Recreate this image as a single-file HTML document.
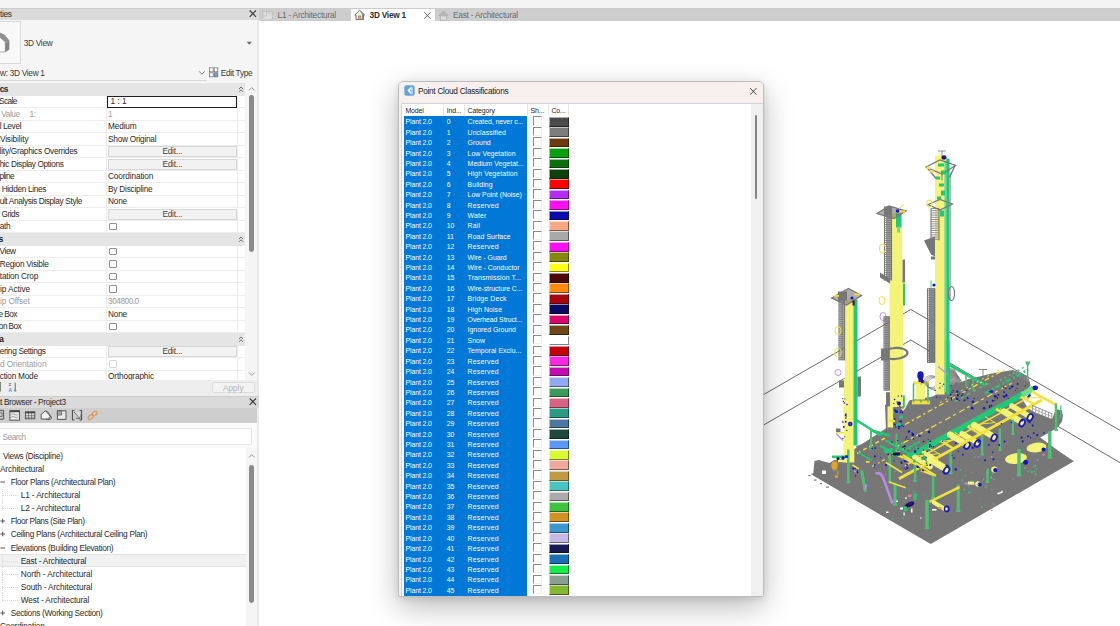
<!DOCTYPE html>
<html lang="en">
<head>
<meta charset="utf-8">
<title>Point Cloud Classifications</title>
<style>
*{box-sizing:border-box;margin:0;padding:0}
html,body{width:1120px;height:626px;overflow:hidden;background:#fff}
body{position:relative;font-family:"Liberation Sans",sans-serif;font-size:8.1px;color:#2a2a2a;letter-spacing:-0.22px}
.abs{position:absolute}
#topstrip{left:0;top:0;width:1120px;height:8px;background:#f4f4f4}
#topline{left:0;top:7.6px;width:1120px;height:0.9px;background:#cbcbcb}
#left{left:0;top:8px;width:257px;height:618px;background:#f5f5f5}
#split{left:256.5px;top:20px;width:2.5px;height:606px;background:#e9e9e9}
.ptitle{position:absolute;left:0;width:258.5px;background:#dadada;color:#333}
.ptitle span{position:absolute;white-space:nowrap}
#iconbox{left:-20px;top:21px;width:41px;height:42.5px;border:1px solid #dadada;background:#f8f8f8}
.t{position:absolute;white-space:nowrap;line-height:12px;height:12px}
#grid{left:0;top:83px;width:245px;height:296.5px;background:#fff;overflow:hidden}
.row{position:absolute;left:0;width:245px;height:12.5px;border-bottom:1px solid #ececec}
.row .l{position:absolute;top:0.8px;line-height:11.5px;white-space:nowrap}
.row .v{position:absolute;left:108px;top:0.8px;line-height:11.5px;white-space:nowrap}
.row.dis{color:#9c9c9c}
.hdr{position:absolute;left:0;width:245px;height:12.5px;z-index:2;background:#e5e5e5;font-weight:bold;color:#222}
.hdr .l{position:absolute;left:0;top:0.4px;line-height:12.5px}
.vline{position:absolute;top:12.5px;left:106.4px;width:1px;height:300px;background:#ececec}
.vline2{position:absolute;top:12.5px;left:237px;width:1px;height:300px;background:#ececec}
.btn{position:absolute;left:107.5px;top:0.6px;width:129.5px;height:11px;border:1px solid #d6d6d6;background:#f2f2f2;text-align:center;line-height:9px;color:#444}
.cb{position:absolute;left:109.2px;top:2.2px;width:7.8px;height:7.8px;border:1px solid #8f8f8f;background:#fff;border-radius:1px}
.dis .cb{border-color:#d8d8d8}
#tabbar{left:258.5px;top:8px;width:862px;height:13.2px;background:#cdcdcd}
#tabact{left:351px;top:8px;width:84px;height:13.2px;background:#fff}
.tab{position:absolute;top:9px;line-height:12px;white-space:nowrap;color:#6c6c6c}
#view{left:259px;top:21.2px;width:861px;height:604.8px;background:#fff}
#dlg{left:398.3px;top:80.5px;width:365.3px;height:516px;border-radius:5px 5px 2px 2px;background:#f0f0f0;border:1px solid #bdbdbd;box-shadow:0 10px 30px rgba(0,0,0,.27),0 2px 7px rgba(0,0,0,.10);overflow:hidden}
#dtitle{left:0;top:0;width:364px;height:22px;background:#f7f0ee}
#lv{left:1.8px;top:21.8px;width:361.6px;height:494px;background:#fff;border:1px solid #cfd4d9;border-bottom:none;border-right:none;overflow:hidden}
#sel{left:1.6px;top:11.9px;width:123px;height:480px;background:#0078d7}
.lr{position:absolute;left:0;height:10.4px;line-height:10.4px;width:360px;font-size:6.9px;letter-spacing:-0.1px;color:#fff;white-space:nowrap}
.lr span{position:absolute;top:0}
.lh{color:#222}
.c1{left:3.4px}.c2{left:44.6px}.c3{left:65.5px}
.ck{position:absolute;left:130.7px;width:9.2px;height:9.2px;background:#fff;border:1.4px solid #8a8a8a;border-right:1px solid #f2f2f2;border-bottom:1px solid #f2f2f2}
.sw{position:absolute;left:147px;width:19.8px;height:9.7px;border:1px solid;border-color:rgba(255,255,255,.55) rgba(0,0,0,.48) rgba(0,0,0,.48) rgba(255,255,255,.55)}
</style>
</head>
<body>
<div id="topstrip" class="abs"></div>
<div id="view" class="abs"></div>
<div id="left" class="abs"></div><div id="split" class="abs"></div>
<div class="abs" style="left:0;top:0;width:258.5px;height:626px;overflow:hidden">
<div class="ptitle" style="top:8px;height:12px"></div>
<div class="t" style="left:-22.79px;top:8.00px;font-size:8.3px;letter-spacing:-0.354px;">Properties</div>
<svg class="abs" style="left:247px;top:9px" width="10" height="10" viewBox="0 0 10 10"><path d="M2.7 1.5 L9 7.9 M9 1.5 L2.7 7.9" stroke="#3a3a3a" stroke-width="1.15" fill="none"/></svg>
<div id="iconbox" class="abs"></div>
<svg class="abs" style="left:0;top:30px" width="20" height="26" viewBox="0 0 20 26">
<polygon points="0,7.4 5.2,11.9 5.2,21.9 0,21.9" fill="#fbfbfb"/>
<polygon points="5.2,11.9 9,13.1 9,19.5 5.2,21.9" fill="#858585"/>
<polygon points="0,3.1 4.4,5 9,10.6 9,13.3 5.2,12.1 0,7.5" fill="#8f8f8f"/>
<path d="M0 3.1 L4.4 5 L9 10.6 L9 19.5 L5.2 21.9 L0 21.9" fill="none" stroke="#7a7a7a" stroke-width="0.6"/>
<path d="M0 7.5 L5.2 12.1 L5.2 21.9" fill="none" stroke="#8a8a8a" stroke-width="0.5"/>
</svg>
<div class="t" style="left:23.80px;top:37.00px;font-size:8.3px;letter-spacing:-0.308px;color:#3a3a3a;">3D View</div>
<svg class="abs" style="left:246px;top:40.5px" width="7" height="5" viewBox="0 0 7 5"><polygon points="0.6,0.8 6,0.8 3.3,3.8" fill="#6e6e6e"/></svg>
<div class="t" style="left:-22.97px;top:66.50px;font-size:8.3px;letter-spacing:-0.299px;color:#3a3a3a;">3D View: 3D View 1</div>
<div class="abs" style="left:0;top:79.5px;width:207px;height:1px;background:#d9d9d9"></div>
<svg class="abs" style="left:198px;top:69.5px" width="8" height="6" viewBox="0 0 8 6"><path d="M1.2 1.4 L3.9 4.2 L6.6 1.4" stroke="#555" stroke-width="0.8" fill="none"/></svg>
<svg class="abs" style="left:209px;top:67px" width="10" height="11" viewBox="0 0 10 11">
<rect x="0.6" y="0.8" width="3.6" height="4" fill="#fff" stroke="#666" stroke-width="0.7"/>
<rect x="5.2" y="0.8" width="3.6" height="4" fill="#fff" stroke="#666" stroke-width="0.7"/>
<rect x="0.6" y="5.8" width="3.6" height="4" fill="#fff" stroke="#666" stroke-width="0.7"/>
<rect x="5.2" y="5.8" width="3.6" height="4" fill="#7f9fc4" stroke="#55708f" stroke-width="0.7"/>
</svg>
<div class="t" style="left:220.80px;top:66.50px;font-size:8.3px;letter-spacing:-0.328px;color:#3a3a3a;">Edit Type</div>
<div id="grid" class="abs"><div class="vline"></div><div class="vline2"></div>
<div class="hdr" style="top:0.0px"><span class="l" style="left:-23.38px;letter-spacing:-0.600px;font-size:8.3px">Graphics</span><svg class="abs" style="left:237.5px;top:3px" width="6" height="7" viewBox="0 0 6 7"><path d="M1 3 L3 1 L5 3 M1 5.8 L3 3.8 L5 5.8" stroke="#444" stroke-width="0.75" fill="none"/></svg></div>
<div class="row" style="top:12.5px"><span class="l" style="left:-18.11px;letter-spacing:-0.600px;font-size:8.3px">View Scale</span><span class="abs" style="left:107px;top:0;width:130.3px;height:12.2px;border:1px solid #1e1e1e;background:#fff;z-index:3"></span><span class="v" style="left:110.5px;font-size:8.3px;letter-spacing:0;z-index:4">1 : 1</span></div>
<div class="row dis" style="top:25.0px"><span class="l" style="left:-18.82px;letter-spacing:-0.486px;font-size:8.3px">Scale Value</span><span class="l" style="left:29.4px;font-size:8.3px">1:</span><span class="v" style="font-size:8.3px">1</span></div>
<div class="row" style="top:37.5px"><span class="l" style="left:-17.95px;letter-spacing:-0.356px;font-size:8.3px">Detail Level</span><span class="v" style="font-size:8.3px;letter-spacing:-0.153px">Medium</span></div>
<div class="row" style="top:50.0px"><span class="l" style="left:-21.06px;letter-spacing:-0.123px;font-size:8.3px">Parts Visibility</span><span class="v" style="font-size:8.3px;letter-spacing:-0.259px">Show Original</span></div>
<div class="row" style="top:62.5px"><span class="l" style="left:-18.33px;letter-spacing:-0.271px;font-size:8.3px">Visibility/Graphics Overrides</span><span class="btn" style="font-size:8.3px">Edit...</span></div>
<div class="row" style="top:75.0px"><span class="l" style="left:-17.32px;letter-spacing:-0.376px;font-size:8.3px">Graphic Display Options</span><span class="btn" style="font-size:8.3px">Edit...</span></div>
<div class="row" style="top:87.5px"><span class="l" style="left:-15.63px;letter-spacing:-0.587px;font-size:8.3px">Discipline</span><span class="v" style="font-size:8.3px;letter-spacing:-0.155px">Coordination</span></div>
<div class="row" style="top:100.0px"><span class="l" style="left:-19.78px;letter-spacing:-0.327px;font-size:8.3px">Show Hidden Lines</span><span class="v" style="font-size:8.3px;letter-spacing:-0.232px">By Discipline</span></div>
<div class="row" style="top:112.5px"><span class="l" style="left:-16.44px;letter-spacing:-0.365px;font-size:8.3px">Default Analysis Display Style</span><span class="v" style="font-size:8.3px;letter-spacing:-0.235px">None</span></div>
<div class="row" style="top:125.0px"><span class="l" style="left:-19.39px;letter-spacing:-0.456px;font-size:8.3px">Show Grids</span><span class="btn" style="font-size:8.3px">Edit...</span></div>
<div class="row" style="top:137.5px"><span class="l" style="left:-21.49px;letter-spacing:-0.279px;font-size:8.3px">Sun Path</span><span class="cb"></span></div>
<div class="hdr" style="top:150.0px"><span class="l" style="left:-23.08px;letter-spacing:-0.600px;font-size:8.3px">Extents</span><svg class="abs" style="left:237.5px;top:3px" width="6" height="7" viewBox="0 0 6 7"><path d="M1 3 L3 1 L5 3 M1 5.8 L3 3.8 L5 5.8" stroke="#444" stroke-width="0.75" fill="none"/></svg></div>
<div class="row" style="top:162.5px"><span class="l" style="left:-18.55px;letter-spacing:-0.435px;font-size:8.3px">Crop View</span><span class="cb"></span></div>
<div class="row" style="top:175.0px"><span class="l" style="left:-19.12px;letter-spacing:-0.293px;font-size:8.3px">Crop Region Visible</span><span class="cb"></span></div>
<div class="row" style="top:187.5px"><span class="l" style="left:-18.76px;letter-spacing:-0.209px;font-size:8.3px">Annotation Crop</span><span class="cb"></span></div>
<div class="row" style="top:200.0px"><span class="l" style="left:-22.14px;letter-spacing:-0.090px;font-size:8.3px">Far Clip Active</span><span class="cb"></span></div>
<div class="row dis" style="top:212.5px"><span class="l" style="left:-22.12px;letter-spacing:-0.095px;font-size:8.3px">Far Clip Offset</span><span class="v" style="font-size:8.3px;letter-spacing:-0.489px">304800.0</span></div>
<div class="row" style="top:225.0px"><span class="l" style="left:-17.94px;letter-spacing:-0.600px;font-size:8.3px">Scope Box</span><span class="v" style="font-size:8.3px;letter-spacing:-0.235px">None</span></div>
<div class="row" style="top:237.5px"><span class="l" style="left:-16.59px;letter-spacing:-0.600px;font-size:8.3px">Section Box</span><span class="cb"></span></div>
<div class="hdr" style="top:250.0px"><span class="l" style="left:-23.65px;letter-spacing:-0.600px;font-size:8.3px">Camera</span><svg class="abs" style="left:237.5px;top:3px" width="6" height="7" viewBox="0 0 6 7"><path d="M1 3 L3 1 L5 3 M1 5.8 L3 3.8 L5 5.8" stroke="#444" stroke-width="0.75" fill="none"/></svg></div>
<div class="row" style="top:262.5px"><span class="l" style="left:-18.82px;letter-spacing:-0.339px;font-size:8.3px">Rendering Settings</span><span class="btn" style="font-size:8.3px">Edit...</span></div>
<div class="row dis" style="top:275.0px"><span class="l" style="left:-21.83px;letter-spacing:-0.078px;font-size:8.3px">Locked Orientation</span><span class="cb"></span></div>
<div class="row" style="top:287.5px"><span class="l" style="left:-18.38px;letter-spacing:-0.250px;font-size:8.3px">Projection Mode</span><span class="v" style="font-size:8.3px;letter-spacing:-0.165px">Orthographic</span></div>
</div>
<div class="abs" style="left:245px;top:83px;width:11.5px;height:296.5px;background:#f5f5f5"></div>
<svg class="abs" style="left:247.5px;top:85.5px" width="8" height="6" viewBox="0 0 8 6"><path d="M1 4.4 L3.8 1.5 L6.6 4.4" stroke="#7a7a7a" stroke-width="0.8" fill="none"/></svg>
<svg class="abs" style="left:247.5px;top:371px" width="8" height="6" viewBox="0 0 8 6"><path d="M1 1.5 L3.8 4.4 L6.6 1.5" stroke="#8a8a8a" stroke-width="0.8" fill="none"/></svg>
<div class="abs" style="left:249px;top:94.5px;width:4.8px;height:157px;border-radius:2.4px;background:#8a8a8a"></div>
<div class="abs" style="left:0;top:379.5px;width:256.5px;height:17.5px;background:#eeeeee"></div>
<svg class="abs" style="left:0;top:381px" width="20" height="13" viewBox="0 0 20 13"><path d="M0.3 1 L0.3 10.5 M15.2 1.6 L15.2 9.6 M14.2 9.2 L15.2 10.4 L16.2 9.2" stroke="#444" stroke-width="0.8" fill="none"/><text x="8.6" y="5.4" font-size="4.4" fill="#666" font-family="Liberation Sans,sans-serif" font-weight="bold">Z</text><text x="8.4" y="10.6" font-size="4.8" fill="#4a90e2" font-family="Liberation Sans,sans-serif" font-weight="bold">A</text></svg>
<div class="abs" style="left:211.5px;top:381.8px;width:43.5px;height:11.2px;border:1px solid #dcdcdc;border-radius:2.2px;background:#f3f3f3"></div>
<div class="t" style="left:223.00px;top:381.50px;font-size:8.3px;letter-spacing:-0.052px;color:#b3b3b3;">Apply</div>
<div class="ptitle" style="top:396.3px;height:11.3px;border-top:0.9px solid #cdcdcd"></div>
<div class="t" style="left:-21.37px;top:396.20px;font-size:8.3px;letter-spacing:-0.359px;">Project Browser - Project3</div>
<svg class="abs" style="left:247px;top:397.3px" width="10" height="10" viewBox="0 0 10 10"><path d="M2.7 1.5 L9 7.9 M9 1.5 L2.7 7.9" stroke="#3a3a3a" stroke-width="1.15" fill="none"/></svg>
<div class="abs" style="left:0;top:407.5px;width:256.5px;height:15px;background:#cecece"></div>
<svg class="abs" style="left:0;top:408px" width="100" height="14" viewBox="0 0 100 14">
<g fill="none" stroke="#474747" stroke-width="0.9">
<path d="M0 2.4 L3.6 2.4 L3.6 11.2 L0 11.2"/><rect x="-1" y="4.8" width="3" height="3.6" stroke-width="0.7"/>
<rect x="9.9" y="2.6" width="9.6" height="9.6" fill="#e9e9e9"/><path d="M9.9 3.4 H19.5" stroke-width="1.6"/><path d="M11.4 6.4 q1.6 -1.4 3.2 0 t3.2 0 M11.4 9 q1.6 -1.4 3.2 0 t3.2 0" stroke-width="0.6" stroke="#777"/>
<rect x="25.4" y="3.8" width="9.4" height="7" fill="#e9e9e9"/><path d="M25.4 4.6 H34.8" stroke-width="1.6"/><path d="M25.4 7.4 H34.8 M25.4 9.2 H34.8 M28.5 4.6 V10.8 M31.6 4.6 V10.8" stroke-width="0.55"/>
<path d="M41.2 11 L41.2 6.2 L45.6 2.8 L51.2 9.4 L49.6 11.2 Z" fill="#f4f4f4" stroke-linejoin="round"/><path d="M45.6 2.8 L48 4 L51.4 9.2 M46 11 L49.8 11.4" stroke-width="0.7"/><circle cx="50.2" cy="10" r="1.3" fill="#bdbdbd" stroke-width="0.6"/>
<path d="M57.4 2.8 H66 V11.4 H57.4 Z" fill="#eaeaea"/><path d="M57.4 2.8 H61.6 V7 H57.4 Z" fill="#a9a9a9" stroke-width="0.7"/>
<path d="M74.4 2.4 H72.4 V12 H74.4 M79.6 2.4 H81.6 V12 H79.6" stroke-width="1.0"/><path d="M74 4 L80 10.4 M80 6.4 V10.4 H76" stroke-width="0.75"/><path d="M74.5 3.6 L80 9.8 L80 4.4 Z" fill="#dedede" stroke="none"/>
</g>
<g fill="none" stroke="#e0904a" stroke-width="1.0"><ellipse cx="90.6" cy="9" rx="2.9" ry="1.8" transform="rotate(-40 90.6 9)"/><ellipse cx="94.6" cy="5.6" rx="2.9" ry="1.8" transform="rotate(-40 94.6 5.6)"/></g>
</svg>
<div class="abs" style="left:0;top:422.5px;width:256.5px;height:26px;background:#fafafa"></div>
<div class="abs" style="left:-2px;top:428px;width:254px;height:17px;background:#fff;border:1px solid #e6e6e6"></div>
<div class="t" style="left:2.60px;top:430.80px;font-size:8.3px;letter-spacing:-0.549px;color:#9a9a9a;">Search</div>
<div class="abs" style="left:0;top:448px;width:245.5px;height:178px;background:#fff"></div>
<div class="abs" style="left:0;top:554.3px;width:245.5px;height:13px;background:#f1f1f1;border-top:1px solid #e2e2e2;border-bottom:1px solid #e2e2e2"></div>
<div class="t" style="left:3.00px;top:450.30px;font-size:8.3px;letter-spacing:-0.313px;color:#2b2b2b;">Views (Discipline)</div>
<div class="t" style="left:0.00px;top:463.33px;font-size:8.3px;letter-spacing:-0.164px;color:#2b2b2b;">Architectural</div>
<div class="t" style="left:10.70px;top:476.36px;font-size:8.3px;letter-spacing:-0.320px;color:#2b2b2b;">Floor Plans (Architectural Plan)</div>
<svg class="abs" style="left:0;top:479.36px" width="6" height="6" viewBox="0 0 6 6"><path d="M0.4 3 H5" stroke="#444" stroke-width="0.9" fill="none"/></svg>
<div class="t" style="left:20.80px;top:489.39px;font-size:8.3px;letter-spacing:-0.154px;color:#2b2b2b;">L1 - Architectural</div>
<div class="abs" style="left:2px;top:488.89px;width:0;height:13.03px;border-left:1px dotted #d9d9d9"></div>
<div class="abs" style="left:2px;top:495.39px;width:16px;height:0;border-top:1px dotted #d9d9d9"></div>
<div class="t" style="left:20.80px;top:502.42px;font-size:8.3px;letter-spacing:-0.154px;color:#2b2b2b;">L2 - Architectural</div>
<div class="abs" style="left:2px;top:501.92px;width:0;height:6.5px;border-left:1px dotted #d9d9d9"></div>
<div class="abs" style="left:2px;top:508.42px;width:16px;height:0;border-top:1px dotted #d9d9d9"></div>
<div class="t" style="left:10.70px;top:515.45px;font-size:8.3px;letter-spacing:-0.393px;color:#2b2b2b;">Floor Plans (Site Plan)</div>
<svg class="abs" style="left:0;top:518.45px" width="6" height="6" viewBox="0 0 6 6"><path d="M0.4 3 H5 M2.7 0.7 V5.3" stroke="#444" stroke-width="0.9" fill="none"/></svg>
<div class="t" style="left:10.70px;top:528.48px;font-size:8.3px;letter-spacing:-0.293px;color:#2b2b2b;">Ceiling Plans (Architectural Ceiling Plan)</div>
<svg class="abs" style="left:0;top:531.48px" width="6" height="6" viewBox="0 0 6 6"><path d="M0.4 3 H5 M2.7 0.7 V5.3" stroke="#444" stroke-width="0.9" fill="none"/></svg>
<div class="t" style="left:10.70px;top:541.51px;font-size:8.3px;letter-spacing:-0.307px;color:#2b2b2b;">Elevations (Building Elevation)</div>
<svg class="abs" style="left:0;top:544.51px" width="6" height="6" viewBox="0 0 6 6"><path d="M0.4 3 H5" stroke="#444" stroke-width="0.9" fill="none"/></svg>
<div class="t" style="left:20.80px;top:554.54px;font-size:8.3px;letter-spacing:-0.213px;color:#2b2b2b;">East - Architectural</div>
<div class="abs" style="left:2px;top:554.04px;width:0;height:13.03px;border-left:1px dotted #d9d9d9"></div>
<div class="abs" style="left:2px;top:560.54px;width:16px;height:0;border-top:1px dotted #d9d9d9"></div>
<div class="t" style="left:20.80px;top:567.57px;font-size:8.3px;letter-spacing:-0.092px;color:#2b2b2b;">North - Architectural</div>
<div class="abs" style="left:2px;top:567.07px;width:0;height:13.03px;border-left:1px dotted #d9d9d9"></div>
<div class="abs" style="left:2px;top:573.57px;width:16px;height:0;border-top:1px dotted #d9d9d9"></div>
<div class="t" style="left:20.80px;top:580.60px;font-size:8.3px;letter-spacing:-0.159px;color:#2b2b2b;">South - Architectural</div>
<div class="abs" style="left:2px;top:580.10px;width:0;height:13.03px;border-left:1px dotted #d9d9d9"></div>
<div class="abs" style="left:2px;top:586.60px;width:16px;height:0;border-top:1px dotted #d9d9d9"></div>
<div class="t" style="left:20.80px;top:593.63px;font-size:8.3px;letter-spacing:-0.170px;color:#2b2b2b;">West - Architectural</div>
<div class="abs" style="left:2px;top:593.13px;width:0;height:6.5px;border-left:1px dotted #d9d9d9"></div>
<div class="abs" style="left:2px;top:599.63px;width:16px;height:0;border-top:1px dotted #d9d9d9"></div>
<div class="t" style="left:10.70px;top:606.66px;font-size:8.3px;letter-spacing:-0.309px;color:#2b2b2b;">Sections (Working Section)</div>
<svg class="abs" style="left:0;top:609.66px" width="6" height="6" viewBox="0 0 6 6"><path d="M0.4 3 H5 M2.7 0.7 V5.3" stroke="#444" stroke-width="0.9" fill="none"/></svg>
<div class="t" style="left:0.00px;top:619.69px;font-size:8.3px;letter-spacing:-0.205px;color:#2b2b2b;">Coordination</div>
<div class="abs" style="left:245.5px;top:448px;width:11px;height:178px;background:#f5f5f5"></div>
<svg class="abs" style="left:247.5px;top:452.5px" width="8" height="6" viewBox="0 0 8 6"><path d="M1 4.4 L3.8 1.5 L6.6 4.4" stroke="#7a7a7a" stroke-width="0.8" fill="none"/></svg>
<div class="abs" style="left:249px;top:465px;width:4.8px;height:138px;border-radius:2.4px;background:#8a8a8a"></div>
</div>
<div id="tabbar" class="abs"></div><div id="tabact" class="abs"></div>
<svg class="abs" style="left:261.5px;top:9.5px" width="12" height="11" viewBox="0 0 12 11">
<rect x="0.9" y="1.6" width="9.4" height="8.4" fill="#dedede" stroke="#b9b9b9" stroke-width="0.7"/>
<path d="M4.4 1.6 V6 M4.4 6 H0.9 M6.6 0.8 V3.6 H10.3" fill="none" stroke="#bdbdbd" stroke-width="0.7"/>
</svg>
<div class="t" style="left:277.50px;top:9.20px;font-size:8.3px;letter-spacing:-0.210px;color:#6c6c6c;">L1 - Architectural</div>
<svg class="abs" style="left:353.5px;top:9.3px" width="12" height="12" viewBox="0 0 12 12">
<path d="M0.8 5.9 L5.6 1.2 L10.6 5.9 L9.4 5.9 L9.4 10.6 L2 10.6 L2 5.9 Z" fill="#f1efe9" stroke="#5e5e5e" stroke-width="0.9" stroke-linejoin="round"/>
<path d="M5.6 1.2 L10.6 5.9 L9.4 5.9 L9.4 10.6 L8 10.6 L8 5.4 Z" fill="#8a8a8a"/>
<rect x="4.4" y="7" width="2.5" height="3.6" fill="#d8b46a" stroke="#7a6a45" stroke-width="0.5"/>
</svg>
<div class="t" style="left:369.50px;top:9.20px;font-size:8.3px;letter-spacing:-0.233px;font-weight:bold;color:#2d2d2d;">3D View 1</div>
<svg class="abs" style="left:423px;top:10.5px" width="9" height="9" viewBox="0 0 9 9"><path d="M1.2 1.2 L7.6 7.8 M7.6 1.2 L1.2 7.8" stroke="#4a4a4a" stroke-width="0.85" fill="none"/></svg>
<svg class="abs" style="left:437.5px;top:9.5px" width="12" height="12" viewBox="0 0 12 12">
<path d="M0.8 5.6 L5.6 1.4 L10.4 5.6 Z" fill="#b5b5b5" stroke="#a6a6a6" stroke-width="0.6"/>
<rect x="2.6" y="5.9" width="6" height="4.4" fill="#dcdcdc" stroke="#ababab" stroke-width="0.7"/>
</svg>
<div class="t" style="left:453.00px;top:9.20px;font-size:8.3px;letter-spacing:-0.233px;color:#6c6c6c;">East - Architectural</div>
<svg class="abs" style="left:259px;top:21.5px" width="861" height="604.5" viewBox="259 21.5 861 604.5">
<line x1="700.0" y1="430.9" x2="910.8" y2="309.0" stroke="#3a3a3a" stroke-width="0.75"/>
<line x1="910.8" y1="309.0" x2="1120.0" y2="429.8" stroke="#3a3a3a" stroke-width="0.75"/>
<line x1="700.0" y1="461.2" x2="910.8" y2="339.6" stroke="#3a3a3a" stroke-width="0.75"/>
<line x1="910.8" y1="339.6" x2="1120.0" y2="462.2" stroke="#3a3a3a" stroke-width="0.75"/>
<polygon points="814.5,460.5 819.0,459.4 824.0,461.0 829.5,462.6 834.0,459.5 843.5,458.8 849.0,452.0 957.0,381.6 1041.0,437.6 1059.0,450.7 1073.9,460.7 930.7,543.5 813.0,475.0" fill="#777777"/>
<rect x="811.5" y="473.0" width="3.0" height="1.3" fill="#777777"/>
<rect x="808.5" y="474.5" width="2.0" height="1.2" fill="#777777"/>
<rect x="814.0" y="479.0" width="2.5" height="1.2" fill="#777777"/>
<rect x="820.0" y="482.5" width="2.0" height="1.2" fill="#777777"/>
<rect x="826.0" y="486.0" width="3.0" height="1.2" fill="#777777"/>
<rect x="822.0" y="470.0" width="4.0" height="3.5" fill="#fff"/>
<rect x="935.0" y="155.0" width="9.6" height="238.0" fill="#f3f378"/>
<rect x="944.3" y="160.0" width="2.2" height="235.0" fill="#6fdc8c"/>
<rect x="946.3" y="158.0" width="3.2" height="237.0" fill="#22c777"/>
<line x1="950.2" y1="172.0" x2="950.2" y2="300.0" stroke="#777777" stroke-width="0.8"/>
<line x1="938.0" y1="150.5" x2="946.0" y2="150.5" stroke="#777777" stroke-width="0.8"/>
<line x1="942.0" y1="150.5" x2="942.0" y2="156.0" stroke="#777777" stroke-width="0.8"/>
<ellipse cx="944.0" cy="157.0" rx="2.6" ry="2.2" fill="#2a1a78" transform="rotate(0 944.0 157.0)"/>
<polygon points="926.0,166.5 940.0,159.5 955.5,165.0 942.0,173.5" fill="none" stroke="#777777" stroke-width="1.3"/>
<line x1="926.5" y1="166.5" x2="936.0" y2="178.0" stroke="#777777" stroke-width="1.3"/>
<line x1="955.0" y1="165.0" x2="949.5" y2="177.0" stroke="#777777" stroke-width="1.3"/>
<line x1="942.0" y1="173.5" x2="942.0" y2="180.0" stroke="#777777" stroke-width="1.0"/>
<rect x="926.5" y="166.0" width="4.0" height="2.5" fill="#f2e23c"/>
<rect x="929.0" y="170.0" width="5.0" height="2.0" fill="#f2e23c"/>
<rect x="938.0" y="163.0" width="6.0" height="3.0" fill="#22c777"/>
<rect x="941.0" y="170.0" width="5.0" height="4.0" fill="#22c777"/>
<rect x="936.0" y="176.0" width="4.0" height="3.0" fill="#22c777"/>
<rect x="939.0" y="183.0" width="5.0" height="3.0" fill="#22c777"/>
<rect x="941.0" y="190.0" width="4.0" height="5.0" fill="#22c777"/>
<rect x="937.0" y="196.0" width="4.0" height="3.0" fill="#22c777"/>
<rect x="940.0" y="210.0" width="4.0" height="6.0" fill="#22c777"/>
<polygon points="928.0,204.0 940.0,199.0 952.5,203.5 940.0,209.5" fill="none" stroke="#777777" stroke-width="1.2"/>
<ellipse cx="929.5" cy="203.0" rx="2.6" ry="3.4" fill="none" stroke="#f2e23c" stroke-width="1.1" transform="rotate(0 929.5 203.0)"/>
<line x1="931.0" y1="208.0" x2="931.0" y2="240.0" stroke="#777777" stroke-width="1.1"/>
<line x1="939.0" y1="208.0" x2="939.0" y2="240.0" stroke="#777777" stroke-width="1.1"/>
<line x1="931.0" y1="208.0" x2="939.0" y2="208.0" stroke="#777777" stroke-width="0.8"/>
<line x1="931.0" y1="210.2" x2="939.0" y2="210.2" stroke="#777777" stroke-width="0.8"/>
<line x1="931.0" y1="212.4" x2="939.0" y2="212.4" stroke="#777777" stroke-width="0.8"/>
<line x1="931.0" y1="214.6" x2="939.0" y2="214.6" stroke="#777777" stroke-width="0.8"/>
<line x1="931.0" y1="216.8" x2="939.0" y2="216.8" stroke="#777777" stroke-width="0.8"/>
<line x1="931.0" y1="219.0" x2="939.0" y2="219.0" stroke="#777777" stroke-width="0.8"/>
<line x1="931.0" y1="221.2" x2="939.0" y2="221.2" stroke="#777777" stroke-width="0.8"/>
<line x1="931.0" y1="223.4" x2="939.0" y2="223.4" stroke="#777777" stroke-width="0.8"/>
<line x1="931.0" y1="225.6" x2="939.0" y2="225.6" stroke="#777777" stroke-width="0.8"/>
<line x1="931.0" y1="227.8" x2="939.0" y2="227.8" stroke="#777777" stroke-width="0.8"/>
<line x1="931.0" y1="230.0" x2="939.0" y2="230.0" stroke="#777777" stroke-width="0.8"/>
<line x1="931.0" y1="232.2" x2="939.0" y2="232.2" stroke="#777777" stroke-width="0.8"/>
<line x1="931.0" y1="234.4" x2="939.0" y2="234.4" stroke="#777777" stroke-width="0.8"/>
<line x1="931.0" y1="236.6" x2="939.0" y2="236.6" stroke="#777777" stroke-width="0.8"/>
<line x1="931.0" y1="238.8" x2="939.0" y2="238.8" stroke="#777777" stroke-width="0.8"/>
<polygon points="924.0,240.0 935.0,236.0 935.0,256.0 931.0,254.0" fill="#777777"/>
<rect x="931.0" y="256.0" width="4.0" height="3.0" fill="#777777"/>
<line x1="927.5" y1="288.0" x2="927.5" y2="362.0" stroke="#777777" stroke-width="1.1"/>
<line x1="934.8" y1="288.0" x2="934.8" y2="362.0" stroke="#777777" stroke-width="1.1"/>
<line x1="927.5" y1="288.0" x2="934.8" y2="288.0" stroke="#777777" stroke-width="0.8"/>
<line x1="927.5" y1="289.8" x2="934.8" y2="289.8" stroke="#777777" stroke-width="0.8"/>
<line x1="927.5" y1="291.6" x2="934.8" y2="291.6" stroke="#777777" stroke-width="0.8"/>
<line x1="927.5" y1="293.4" x2="934.8" y2="293.4" stroke="#777777" stroke-width="0.8"/>
<line x1="927.5" y1="295.2" x2="934.8" y2="295.2" stroke="#777777" stroke-width="0.8"/>
<line x1="927.5" y1="297.0" x2="934.8" y2="297.0" stroke="#777777" stroke-width="0.8"/>
<line x1="927.5" y1="298.8" x2="934.8" y2="298.8" stroke="#777777" stroke-width="0.8"/>
<line x1="927.5" y1="300.6" x2="934.8" y2="300.6" stroke="#777777" stroke-width="0.8"/>
<line x1="927.5" y1="302.4" x2="934.8" y2="302.4" stroke="#777777" stroke-width="0.8"/>
<line x1="927.5" y1="304.2" x2="934.8" y2="304.2" stroke="#777777" stroke-width="0.8"/>
<line x1="927.5" y1="306.0" x2="934.8" y2="306.0" stroke="#777777" stroke-width="0.8"/>
<line x1="927.5" y1="307.8" x2="934.8" y2="307.8" stroke="#777777" stroke-width="0.8"/>
<line x1="927.5" y1="309.6" x2="934.8" y2="309.6" stroke="#777777" stroke-width="0.8"/>
<line x1="927.5" y1="311.4" x2="934.8" y2="311.4" stroke="#777777" stroke-width="0.8"/>
<line x1="927.5" y1="313.2" x2="934.8" y2="313.2" stroke="#777777" stroke-width="0.8"/>
<line x1="927.5" y1="315.0" x2="934.8" y2="315.0" stroke="#777777" stroke-width="0.8"/>
<line x1="927.5" y1="316.8" x2="934.8" y2="316.8" stroke="#777777" stroke-width="0.8"/>
<line x1="927.5" y1="318.6" x2="934.8" y2="318.6" stroke="#777777" stroke-width="0.8"/>
<line x1="927.5" y1="320.4" x2="934.8" y2="320.4" stroke="#777777" stroke-width="0.8"/>
<line x1="927.5" y1="322.2" x2="934.8" y2="322.2" stroke="#777777" stroke-width="0.8"/>
<line x1="927.5" y1="324.0" x2="934.8" y2="324.0" stroke="#777777" stroke-width="0.8"/>
<line x1="927.5" y1="325.8" x2="934.8" y2="325.8" stroke="#777777" stroke-width="0.8"/>
<line x1="927.5" y1="327.6" x2="934.8" y2="327.6" stroke="#777777" stroke-width="0.8"/>
<line x1="927.5" y1="329.4" x2="934.8" y2="329.4" stroke="#777777" stroke-width="0.8"/>
<line x1="927.5" y1="331.2" x2="934.8" y2="331.2" stroke="#777777" stroke-width="0.8"/>
<line x1="927.5" y1="333.0" x2="934.8" y2="333.0" stroke="#777777" stroke-width="0.8"/>
<line x1="927.5" y1="334.8" x2="934.8" y2="334.8" stroke="#777777" stroke-width="0.8"/>
<line x1="927.5" y1="336.6" x2="934.8" y2="336.6" stroke="#777777" stroke-width="0.8"/>
<line x1="927.5" y1="338.4" x2="934.8" y2="338.4" stroke="#777777" stroke-width="0.8"/>
<line x1="927.5" y1="340.2" x2="934.8" y2="340.2" stroke="#777777" stroke-width="0.8"/>
<line x1="927.5" y1="342.0" x2="934.8" y2="342.0" stroke="#777777" stroke-width="0.8"/>
<line x1="927.5" y1="343.8" x2="934.8" y2="343.8" stroke="#777777" stroke-width="0.8"/>
<line x1="927.5" y1="345.6" x2="934.8" y2="345.6" stroke="#777777" stroke-width="0.8"/>
<line x1="927.5" y1="347.4" x2="934.8" y2="347.4" stroke="#777777" stroke-width="0.8"/>
<line x1="927.5" y1="349.2" x2="934.8" y2="349.2" stroke="#777777" stroke-width="0.8"/>
<line x1="927.5" y1="351.0" x2="934.8" y2="351.0" stroke="#777777" stroke-width="0.8"/>
<line x1="927.5" y1="352.8" x2="934.8" y2="352.8" stroke="#777777" stroke-width="0.8"/>
<line x1="927.5" y1="354.6" x2="934.8" y2="354.6" stroke="#777777" stroke-width="0.8"/>
<line x1="927.5" y1="356.4" x2="934.8" y2="356.4" stroke="#777777" stroke-width="0.8"/>
<line x1="927.5" y1="358.2" x2="934.8" y2="358.2" stroke="#777777" stroke-width="0.8"/>
<line x1="927.5" y1="360.0" x2="934.8" y2="360.0" stroke="#777777" stroke-width="0.8"/>
<line x1="927.5" y1="361.8" x2="934.8" y2="361.8" stroke="#777777" stroke-width="0.8"/>
<rect x="929.0" y="288.0" width="6.0" height="74.0" fill="#777777cc"/>
<ellipse cx="951.5" cy="293.0" rx="3" ry="7" fill="none" stroke="#777777" stroke-width="1.2" transform="rotate(0 951.5 293.0)"/>
<circle cx="934.0" cy="284.5" r="1.6" fill="#1616c4"/>
<line x1="931.0" y1="280.0" x2="931.0" y2="287.0" stroke="#22c777" stroke-width="0.9"/>
<rect x="892.0" y="212.5" width="10.0" height="70.0" fill="#f3f378"/>
<rect x="889.5" y="280.0" width="13.5" height="148.0" fill="#f3f378"/>
<rect x="896.0" y="213.0" width="5.4" height="14.0" fill="#22c777"/>
<rect x="897.0" y="226.0" width="3.0" height="6.0" fill="#6fdc8c"/>
<polygon points="877.0,213.0 889.0,205.5 906.0,210.5 894.0,218.0" fill="#77777799" stroke="#777777" stroke-width="1.2"/>
<rect x="884.0" y="206.0" width="8.0" height="9.0" fill="#777777"/>
<circle cx="897.5" cy="210.5" r="1.7" fill="#1616c4"/>
<line x1="899.0" y1="208.0" x2="904.0" y2="204.0" stroke="#f2e23c" stroke-width="1"/>
<rect x="900.0" y="210.0" width="5.0" height="2.0" fill="#f2e23c"/>
<line x1="884.5" y1="214.0" x2="884.5" y2="280.0" stroke="#777777" stroke-width="1.1"/>
<line x1="891.5" y1="214.0" x2="891.5" y2="280.0" stroke="#777777" stroke-width="1.1"/>
<line x1="884.5" y1="214.0" x2="891.5" y2="214.0" stroke="#777777" stroke-width="0.8"/>
<line x1="884.5" y1="216.0" x2="891.5" y2="216.0" stroke="#777777" stroke-width="0.8"/>
<line x1="884.5" y1="218.0" x2="891.5" y2="218.0" stroke="#777777" stroke-width="0.8"/>
<line x1="884.5" y1="220.0" x2="891.5" y2="220.0" stroke="#777777" stroke-width="0.8"/>
<line x1="884.5" y1="222.0" x2="891.5" y2="222.0" stroke="#777777" stroke-width="0.8"/>
<line x1="884.5" y1="224.0" x2="891.5" y2="224.0" stroke="#777777" stroke-width="0.8"/>
<line x1="884.5" y1="226.0" x2="891.5" y2="226.0" stroke="#777777" stroke-width="0.8"/>
<line x1="884.5" y1="228.0" x2="891.5" y2="228.0" stroke="#777777" stroke-width="0.8"/>
<line x1="884.5" y1="230.0" x2="891.5" y2="230.0" stroke="#777777" stroke-width="0.8"/>
<line x1="884.5" y1="232.0" x2="891.5" y2="232.0" stroke="#777777" stroke-width="0.8"/>
<line x1="884.5" y1="234.0" x2="891.5" y2="234.0" stroke="#777777" stroke-width="0.8"/>
<line x1="884.5" y1="236.0" x2="891.5" y2="236.0" stroke="#777777" stroke-width="0.8"/>
<line x1="884.5" y1="238.0" x2="891.5" y2="238.0" stroke="#777777" stroke-width="0.8"/>
<line x1="884.5" y1="240.0" x2="891.5" y2="240.0" stroke="#777777" stroke-width="0.8"/>
<line x1="884.5" y1="242.0" x2="891.5" y2="242.0" stroke="#777777" stroke-width="0.8"/>
<line x1="884.5" y1="244.0" x2="891.5" y2="244.0" stroke="#777777" stroke-width="0.8"/>
<line x1="884.5" y1="246.0" x2="891.5" y2="246.0" stroke="#777777" stroke-width="0.8"/>
<line x1="884.5" y1="248.0" x2="891.5" y2="248.0" stroke="#777777" stroke-width="0.8"/>
<line x1="884.5" y1="250.0" x2="891.5" y2="250.0" stroke="#777777" stroke-width="0.8"/>
<line x1="884.5" y1="252.0" x2="891.5" y2="252.0" stroke="#777777" stroke-width="0.8"/>
<line x1="884.5" y1="254.0" x2="891.5" y2="254.0" stroke="#777777" stroke-width="0.8"/>
<line x1="884.5" y1="256.0" x2="891.5" y2="256.0" stroke="#777777" stroke-width="0.8"/>
<line x1="884.5" y1="258.0" x2="891.5" y2="258.0" stroke="#777777" stroke-width="0.8"/>
<line x1="884.5" y1="260.0" x2="891.5" y2="260.0" stroke="#777777" stroke-width="0.8"/>
<line x1="884.5" y1="262.0" x2="891.5" y2="262.0" stroke="#777777" stroke-width="0.8"/>
<line x1="884.5" y1="264.0" x2="891.5" y2="264.0" stroke="#777777" stroke-width="0.8"/>
<line x1="884.5" y1="266.0" x2="891.5" y2="266.0" stroke="#777777" stroke-width="0.8"/>
<line x1="884.5" y1="268.0" x2="891.5" y2="268.0" stroke="#777777" stroke-width="0.8"/>
<line x1="884.5" y1="270.0" x2="891.5" y2="270.0" stroke="#777777" stroke-width="0.8"/>
<line x1="884.5" y1="272.0" x2="891.5" y2="272.0" stroke="#777777" stroke-width="0.8"/>
<line x1="884.5" y1="274.0" x2="891.5" y2="274.0" stroke="#777777" stroke-width="0.8"/>
<line x1="884.5" y1="276.0" x2="891.5" y2="276.0" stroke="#777777" stroke-width="0.8"/>
<line x1="884.5" y1="278.0" x2="891.5" y2="278.0" stroke="#777777" stroke-width="0.8"/>
<rect x="886.0" y="214.0" width="5.0" height="66.0" fill="#777777bb"/>
<rect x="902.5" y="259.0" width="2.6" height="23.0" fill="#777777"/>
<rect x="903.0" y="283.0" width="2.0" height="22.0" fill="#22c777"/>
<ellipse cx="882.5" cy="248.0" rx="3" ry="4.5" fill="none" stroke="#f2e23c" stroke-width="1.1" transform="rotate(0 882.5 248.0)"/>
<ellipse cx="882.0" cy="300.0" rx="3" ry="4" fill="none" stroke="#f2e23c" stroke-width="1.0" transform="rotate(0 882.0 300.0)"/>
<ellipse cx="883.0" cy="316.0" rx="3" ry="4" fill="none" stroke="#b98ae8" stroke-width="0.9" transform="rotate(0 883.0 316.0)"/>
<polygon points="880.0,272.0 890.0,278.0 890.0,283.0 880.0,277.0" fill="#777777"/>
<line x1="884.0" y1="316.0" x2="884.0" y2="390.0" stroke="#777777" stroke-width="1.1"/>
<line x1="889.3" y1="316.0" x2="889.3" y2="390.0" stroke="#777777" stroke-width="1.1"/>
<line x1="884.0" y1="316.0" x2="889.3" y2="316.0" stroke="#777777" stroke-width="0.8"/>
<line x1="884.0" y1="317.8" x2="889.3" y2="317.8" stroke="#777777" stroke-width="0.8"/>
<line x1="884.0" y1="319.6" x2="889.3" y2="319.6" stroke="#777777" stroke-width="0.8"/>
<line x1="884.0" y1="321.4" x2="889.3" y2="321.4" stroke="#777777" stroke-width="0.8"/>
<line x1="884.0" y1="323.2" x2="889.3" y2="323.2" stroke="#777777" stroke-width="0.8"/>
<line x1="884.0" y1="325.0" x2="889.3" y2="325.0" stroke="#777777" stroke-width="0.8"/>
<line x1="884.0" y1="326.8" x2="889.3" y2="326.8" stroke="#777777" stroke-width="0.8"/>
<line x1="884.0" y1="328.6" x2="889.3" y2="328.6" stroke="#777777" stroke-width="0.8"/>
<line x1="884.0" y1="330.4" x2="889.3" y2="330.4" stroke="#777777" stroke-width="0.8"/>
<line x1="884.0" y1="332.2" x2="889.3" y2="332.2" stroke="#777777" stroke-width="0.8"/>
<line x1="884.0" y1="334.0" x2="889.3" y2="334.0" stroke="#777777" stroke-width="0.8"/>
<line x1="884.0" y1="335.8" x2="889.3" y2="335.8" stroke="#777777" stroke-width="0.8"/>
<line x1="884.0" y1="337.6" x2="889.3" y2="337.6" stroke="#777777" stroke-width="0.8"/>
<line x1="884.0" y1="339.4" x2="889.3" y2="339.4" stroke="#777777" stroke-width="0.8"/>
<line x1="884.0" y1="341.2" x2="889.3" y2="341.2" stroke="#777777" stroke-width="0.8"/>
<line x1="884.0" y1="343.0" x2="889.3" y2="343.0" stroke="#777777" stroke-width="0.8"/>
<line x1="884.0" y1="344.8" x2="889.3" y2="344.8" stroke="#777777" stroke-width="0.8"/>
<line x1="884.0" y1="346.6" x2="889.3" y2="346.6" stroke="#777777" stroke-width="0.8"/>
<line x1="884.0" y1="348.4" x2="889.3" y2="348.4" stroke="#777777" stroke-width="0.8"/>
<line x1="884.0" y1="350.2" x2="889.3" y2="350.2" stroke="#777777" stroke-width="0.8"/>
<line x1="884.0" y1="352.0" x2="889.3" y2="352.0" stroke="#777777" stroke-width="0.8"/>
<line x1="884.0" y1="353.8" x2="889.3" y2="353.8" stroke="#777777" stroke-width="0.8"/>
<line x1="884.0" y1="355.6" x2="889.3" y2="355.6" stroke="#777777" stroke-width="0.8"/>
<line x1="884.0" y1="357.4" x2="889.3" y2="357.4" stroke="#777777" stroke-width="0.8"/>
<line x1="884.0" y1="359.2" x2="889.3" y2="359.2" stroke="#777777" stroke-width="0.8"/>
<line x1="884.0" y1="361.0" x2="889.3" y2="361.0" stroke="#777777" stroke-width="0.8"/>
<line x1="884.0" y1="362.8" x2="889.3" y2="362.8" stroke="#777777" stroke-width="0.8"/>
<line x1="884.0" y1="364.6" x2="889.3" y2="364.6" stroke="#777777" stroke-width="0.8"/>
<line x1="884.0" y1="366.4" x2="889.3" y2="366.4" stroke="#777777" stroke-width="0.8"/>
<line x1="884.0" y1="368.2" x2="889.3" y2="368.2" stroke="#777777" stroke-width="0.8"/>
<line x1="884.0" y1="370.0" x2="889.3" y2="370.0" stroke="#777777" stroke-width="0.8"/>
<line x1="884.0" y1="371.8" x2="889.3" y2="371.8" stroke="#777777" stroke-width="0.8"/>
<line x1="884.0" y1="373.6" x2="889.3" y2="373.6" stroke="#777777" stroke-width="0.8"/>
<line x1="884.0" y1="375.4" x2="889.3" y2="375.4" stroke="#777777" stroke-width="0.8"/>
<line x1="884.0" y1="377.2" x2="889.3" y2="377.2" stroke="#777777" stroke-width="0.8"/>
<line x1="884.0" y1="379.0" x2="889.3" y2="379.0" stroke="#777777" stroke-width="0.8"/>
<line x1="884.0" y1="380.8" x2="889.3" y2="380.8" stroke="#777777" stroke-width="0.8"/>
<line x1="884.0" y1="382.6" x2="889.3" y2="382.6" stroke="#777777" stroke-width="0.8"/>
<line x1="884.0" y1="384.4" x2="889.3" y2="384.4" stroke="#777777" stroke-width="0.8"/>
<line x1="884.0" y1="386.2" x2="889.3" y2="386.2" stroke="#777777" stroke-width="0.8"/>
<line x1="884.0" y1="388.0" x2="889.3" y2="388.0" stroke="#777777" stroke-width="0.8"/>
<line x1="884.0" y1="389.8" x2="889.3" y2="389.8" stroke="#777777" stroke-width="0.8"/>
<rect x="885.0" y="316.0" width="4.0" height="74.0" fill="#777777bb"/>
<ellipse cx="895.0" cy="353.0" rx="12.5" ry="5.5" fill="none" stroke="#777777" stroke-width="2.2" transform="rotate(-4 895.0 353.0)"/>
<rect x="881.0" y="348.0" width="8.0" height="12.0" fill="#777777"/>
<rect x="886.0" y="392.0" width="4.0" height="30.0" fill="#777777"/>
<rect x="845.0" y="299.0" width="8.7" height="82.0" fill="#f3f378"/>
<rect x="843.5" y="378.0" width="10.8" height="84.0" fill="#f3f378"/>
<rect x="853.5" y="299.0" width="4.0" height="146.0" fill="#22c777"/>
<polygon points="831.7,297.6 848.4,288.0 861.6,295.0 846.7,304.6" fill="#77777799" stroke="#777777" stroke-width="1.2"/>
<rect x="838.0" y="291.0" width="9.0" height="9.0" fill="#777777"/>
<rect x="834.0" y="294.5" width="5.0" height="1.8" fill="#f2e23c"/>
<rect x="854.0" y="293.0" width="6.0" height="1.8" fill="#f2e23c"/>
<circle cx="852.0" cy="297.5" r="1.6" fill="#1616c4"/>
<rect x="852.5" y="300.0" width="2.2" height="5.0" fill="#4a1030"/>
<line x1="839.0" y1="300.0" x2="839.0" y2="360.0" stroke="#777777" stroke-width="1.1"/>
<line x1="844.6" y1="300.0" x2="844.6" y2="360.0" stroke="#777777" stroke-width="1.1"/>
<line x1="839.0" y1="300.0" x2="844.6" y2="300.0" stroke="#777777" stroke-width="0.8"/>
<line x1="839.0" y1="301.9" x2="844.6" y2="301.9" stroke="#777777" stroke-width="0.8"/>
<line x1="839.0" y1="303.8" x2="844.6" y2="303.8" stroke="#777777" stroke-width="0.8"/>
<line x1="839.0" y1="305.7" x2="844.6" y2="305.7" stroke="#777777" stroke-width="0.8"/>
<line x1="839.0" y1="307.6" x2="844.6" y2="307.6" stroke="#777777" stroke-width="0.8"/>
<line x1="839.0" y1="309.5" x2="844.6" y2="309.5" stroke="#777777" stroke-width="0.8"/>
<line x1="839.0" y1="311.4" x2="844.6" y2="311.4" stroke="#777777" stroke-width="0.8"/>
<line x1="839.0" y1="313.3" x2="844.6" y2="313.3" stroke="#777777" stroke-width="0.8"/>
<line x1="839.0" y1="315.2" x2="844.6" y2="315.2" stroke="#777777" stroke-width="0.8"/>
<line x1="839.0" y1="317.1" x2="844.6" y2="317.1" stroke="#777777" stroke-width="0.8"/>
<line x1="839.0" y1="319.0" x2="844.6" y2="319.0" stroke="#777777" stroke-width="0.8"/>
<line x1="839.0" y1="320.9" x2="844.6" y2="320.9" stroke="#777777" stroke-width="0.8"/>
<line x1="839.0" y1="322.8" x2="844.6" y2="322.8" stroke="#777777" stroke-width="0.8"/>
<line x1="839.0" y1="324.7" x2="844.6" y2="324.7" stroke="#777777" stroke-width="0.8"/>
<line x1="839.0" y1="326.6" x2="844.6" y2="326.6" stroke="#777777" stroke-width="0.8"/>
<line x1="839.0" y1="328.5" x2="844.6" y2="328.5" stroke="#777777" stroke-width="0.8"/>
<line x1="839.0" y1="330.4" x2="844.6" y2="330.4" stroke="#777777" stroke-width="0.8"/>
<line x1="839.0" y1="332.3" x2="844.6" y2="332.3" stroke="#777777" stroke-width="0.8"/>
<line x1="839.0" y1="334.2" x2="844.6" y2="334.2" stroke="#777777" stroke-width="0.8"/>
<line x1="839.0" y1="336.1" x2="844.6" y2="336.1" stroke="#777777" stroke-width="0.8"/>
<line x1="839.0" y1="338.0" x2="844.6" y2="338.0" stroke="#777777" stroke-width="0.8"/>
<line x1="839.0" y1="339.9" x2="844.6" y2="339.9" stroke="#777777" stroke-width="0.8"/>
<line x1="839.0" y1="341.8" x2="844.6" y2="341.8" stroke="#777777" stroke-width="0.8"/>
<line x1="839.0" y1="343.7" x2="844.6" y2="343.7" stroke="#777777" stroke-width="0.8"/>
<line x1="839.0" y1="345.6" x2="844.6" y2="345.6" stroke="#777777" stroke-width="0.8"/>
<line x1="839.0" y1="347.5" x2="844.6" y2="347.5" stroke="#777777" stroke-width="0.8"/>
<line x1="839.0" y1="349.4" x2="844.6" y2="349.4" stroke="#777777" stroke-width="0.8"/>
<line x1="839.0" y1="351.3" x2="844.6" y2="351.3" stroke="#777777" stroke-width="0.8"/>
<line x1="839.0" y1="353.2" x2="844.6" y2="353.2" stroke="#777777" stroke-width="0.8"/>
<line x1="839.0" y1="355.1" x2="844.6" y2="355.1" stroke="#777777" stroke-width="0.8"/>
<line x1="839.0" y1="357.0" x2="844.6" y2="357.0" stroke="#777777" stroke-width="0.8"/>
<line x1="839.0" y1="358.9" x2="844.6" y2="358.9" stroke="#777777" stroke-width="0.8"/>
<rect x="840.3" y="300.0" width="3.5" height="60.0" fill="#777777bb"/>
<ellipse cx="838.0" cy="330.0" rx="3" ry="4" fill="none" stroke="#f2e23c" stroke-width="1.0" transform="rotate(0 838.0 330.0)"/>
<ellipse cx="838.0" cy="352.0" rx="3.2" ry="4.2" fill="none" stroke="#f2e23c" stroke-width="1.0" transform="rotate(0 838.0 352.0)"/>
<ellipse cx="838.0" cy="372.0" rx="3" ry="3" fill="none" stroke="#b98ae8" stroke-width="0.9" transform="rotate(0 838.0 372.0)"/>
<rect x="857.5" y="376.0" width="3.5" height="20.0" fill="#777777"/>
<rect x="839.0" y="380.0" width="5.0" height="7.0" fill="#777777"/>
<circle cx="844.3" cy="402.5" r="0.83" fill="#1616c4"/>
<circle cx="842.9" cy="421.8" r="0.68" fill="#1616c4"/>
<circle cx="842.8" cy="420.4" r="0.52" fill="#1616c4"/>
<circle cx="844.9" cy="398.5" r="0.55" fill="#1616c4"/>
<circle cx="844.8" cy="436.3" r="0.56" fill="#1616c4"/>
<circle cx="843.7" cy="426.4" r="0.97" fill="#1616c4"/>
<circle cx="845.7" cy="414.8" r="0.99" fill="#1616c4"/>
<circle cx="842.8" cy="437.9" r="0.64" fill="#1616c4"/>
<circle cx="843.3" cy="400.9" r="0.65" fill="#1616c4"/>
<circle cx="847.0" cy="404.0" r="0.79" fill="#1616c4"/>
<circle cx="846.0" cy="413.6" r="0.77" fill="#1616c4"/>
<circle cx="842.8" cy="398.0" r="0.6" fill="#1616c4"/>
<circle cx="846.2" cy="416.4" r="0.66" fill="#1616c4"/>
<circle cx="845.7" cy="417.7" r="0.65" fill="#1616c4"/>
<circle cx="846.9" cy="429.9" r="0.62" fill="#1616c4"/>
<circle cx="845.7" cy="421.3" r="0.94" fill="#1616c4"/>
<circle cx="850.2" cy="423.5" r="2.3" fill="#1616c4"/>
<circle cx="850.2" cy="423.5" r="1.0" fill="#5a5ae0"/>
<rect x="836.0" y="428.0" width="4.5" height="4.5" fill="#777777"/>
<line x1="836.0" y1="433.0" x2="843.0" y2="440.0" stroke="#b98ae8" stroke-width="1.3"/>
<rect x="836.0" y="431.5" width="8.0" height="1.4" fill="#f2e23c"/>
<line x1="855.5" y1="419.0" x2="886.0" y2="438.5" stroke="#22c777" stroke-width="2.4"/>
<polygon points="855.5,446.0 864.0,442.8 881.8,435.0 889.5,430.0 888.7,420.0 903.0,412.0 909.5,399.7 933.0,396.0 942.7,389.3 967.6,378.9 992.6,372.7 1013.0,369.5 1028.4,376.0 1030.5,385.0 1021.0,396.5 1029.0,409.5 1052.0,418.5 1056.0,409.0 1061.5,409.5 1063.0,415.0 1062.0,421.0 1058.0,426.5 1052.0,430.5 1039.8,437.2 957.0,500.0 934.0,512.0" fill="#777777"/>
<rect x="889.5" y="395.0" width="13.5" height="12.0" fill="#f3f378"/>
<rect x="903.0" y="395.0" width="1.8" height="12.0" fill="#22c777"/>
<polygon points="885.0,404.0 890.0,407.0 903.0,406.0 906.0,412.0 906.0,428.0 886.0,431.0" fill="#777777"/>
<rect x="886.0" y="392.0" width="4.0" height="16.0" fill="#777777"/>
<rect x="887.5" y="406.0" width="5.5" height="21.0" fill="#f3f378"/>
<rect x="893.0" y="410.0" width="5.0" height="2.5" fill="#22c777"/>
<rect x="899.0" y="415.0" width="4.0" height="3.0" fill="#22c777"/>
<rect x="889.0" y="419.0" width="6.0" height="2.5" fill="#f2e23c"/>
<rect x="896.0" y="423.0" width="5.0" height="2.5" fill="#22c777"/>
<rect x="901.0" y="408.0" width="3.0" height="2.0" fill="#f3f378"/>
<rect x="890.0" y="413.0" width="3.0" height="2.0" fill="#f3f378"/>
<rect x="913.0" y="381.0" width="16.0" height="3.0" fill="#f2e23c"/>
<rect x="912.0" y="400.0" width="18.0" height="3.8" fill="#f2e23c"/>
<line x1="913.5" y1="383.0" x2="913.5" y2="402.0" stroke="#4fbf73" stroke-width="1.6"/>
<line x1="921.0" y1="383.0" x2="921.0" y2="402.0" stroke="#4fbf73" stroke-width="1.6"/>
<line x1="928.0" y1="383.0" x2="928.0" y2="402.0" stroke="#4fbf73" stroke-width="1.6"/>
<rect x="916.0" y="384.0" width="9.0" height="15.0" fill="#f3f378"/>
<ellipse cx="920.5" cy="375.0" rx="3.2" ry="4.2" fill="#1616c4" transform="rotate(0 920.5 375.0)"/>
<rect x="918.5" y="378.0" width="4.5" height="3.5" fill="#2a1a78"/>
<circle cx="922.5" cy="381.0" r="1.8" fill="#1616c4"/>
<ellipse cx="931.0" cy="381.0" rx="7" ry="6" fill="none" stroke="#777777" stroke-width="0.6" transform="rotate(0 931.0 381.0)"/>
<ellipse cx="932.2" cy="381.8" rx="7" ry="6" fill="none" stroke="#777777" stroke-width="0.6" transform="rotate(0 932.2 381.8)"/>
<ellipse cx="933.4" cy="382.6" rx="7" ry="6" fill="none" stroke="#777777" stroke-width="0.6" transform="rotate(0 933.4 382.6)"/>
<ellipse cx="934.6" cy="383.4" rx="7" ry="6" fill="none" stroke="#777777" stroke-width="0.6" transform="rotate(0 934.6 383.4)"/>
<polygon points="946.0,366.0 955.0,369.0 960.0,380.0 960.0,390.0 946.0,394.0" fill="#777777b0"/>
<ellipse cx="950.0" cy="376.0" rx="7" ry="6" fill="none" stroke="#777777" stroke-width="0.7" transform="rotate(0 950.0 376.0)"/>
<ellipse cx="951.2" cy="377.6" rx="7" ry="6" fill="none" stroke="#777777" stroke-width="0.7" transform="rotate(0 951.2 377.6)"/>
<ellipse cx="952.4" cy="379.2" rx="7" ry="6" fill="none" stroke="#777777" stroke-width="0.7" transform="rotate(0 952.4 379.2)"/>
<ellipse cx="953.6" cy="380.8" rx="7" ry="6" fill="none" stroke="#777777" stroke-width="0.7" transform="rotate(0 953.6 380.8)"/>
<ellipse cx="954.8" cy="382.4" rx="7" ry="6" fill="none" stroke="#777777" stroke-width="0.7" transform="rotate(0 954.8 382.4)"/>
<rect x="935.0" y="340.0" width="9.6" height="54.0" fill="#f3f378"/>
<rect x="944.3" y="340.0" width="2.2" height="52.0" fill="#6fdc8c"/>
<rect x="946.3" y="340.0" width="3.2" height="54.0" fill="#22c777"/>
<line x1="927.5" y1="340.0" x2="927.5" y2="362.0" stroke="#777777" stroke-width="1.1"/>
<line x1="934.8" y1="340.0" x2="934.8" y2="362.0" stroke="#777777" stroke-width="1.1"/>
<line x1="927.5" y1="340.0" x2="934.8" y2="340.0" stroke="#777777" stroke-width="0.8"/>
<line x1="927.5" y1="341.8" x2="934.8" y2="341.8" stroke="#777777" stroke-width="0.8"/>
<line x1="927.5" y1="343.6" x2="934.8" y2="343.6" stroke="#777777" stroke-width="0.8"/>
<line x1="927.5" y1="345.4" x2="934.8" y2="345.4" stroke="#777777" stroke-width="0.8"/>
<line x1="927.5" y1="347.2" x2="934.8" y2="347.2" stroke="#777777" stroke-width="0.8"/>
<line x1="927.5" y1="349.0" x2="934.8" y2="349.0" stroke="#777777" stroke-width="0.8"/>
<line x1="927.5" y1="350.8" x2="934.8" y2="350.8" stroke="#777777" stroke-width="0.8"/>
<line x1="927.5" y1="352.6" x2="934.8" y2="352.6" stroke="#777777" stroke-width="0.8"/>
<line x1="927.5" y1="354.4" x2="934.8" y2="354.4" stroke="#777777" stroke-width="0.8"/>
<line x1="927.5" y1="356.2" x2="934.8" y2="356.2" stroke="#777777" stroke-width="0.8"/>
<line x1="927.5" y1="358.0" x2="934.8" y2="358.0" stroke="#777777" stroke-width="0.8"/>
<line x1="927.5" y1="359.8" x2="934.8" y2="359.8" stroke="#777777" stroke-width="0.8"/>
<line x1="927.5" y1="361.6" x2="934.8" y2="361.6" stroke="#777777" stroke-width="0.8"/>
<rect x="929.0" y="340.0" width="6.0" height="22.0" fill="#777777cc"/>
<rect x="935.0" y="362.0" width="1.5" height="28.0" fill="#f3f378"/>
<line x1="938.0" y1="366.0" x2="948.0" y2="374.0" stroke="#b98ae8" stroke-width="1.2"/>
<line x1="949.5" y1="364.5" x2="969.0" y2="375.5" stroke="#22c777" stroke-width="2.8"/>
<line x1="969.0" y1="375.5" x2="985.0" y2="384.5" stroke="#22c777" stroke-width="2.8"/>
<line x1="966.0" y1="374.0" x2="966.0" y2="386.0" stroke="#4fbf73" stroke-width="1.6"/>
<line x1="973.0" y1="378.0" x2="973.0" y2="390.0" stroke="#4fbf73" stroke-width="1.6"/>
<line x1="1027.7" y1="362.0" x2="1027.7" y2="380.0" stroke="#4fbf73" stroke-width="1.4"/>
<polygon points="1025.0,361.0 1030.6,361.0 1029.0,364.8 1026.5,364.8" fill="#4fbf73"/>
<line x1="979.0" y1="369.0" x2="987.0" y2="369.0" stroke="#777777" stroke-width="0.9"/>
<line x1="983.0" y1="369.0" x2="983.0" y2="376.0" stroke="#777777" stroke-width="0.9"/>
<line x1="1013.0" y1="369.5" x2="1013.0" y2="374.0" stroke="#9a9a9a" stroke-width="0.5"/>
<line x1="1014.9" y1="370.4" x2="1014.9" y2="374.9" stroke="#9a9a9a" stroke-width="0.5"/>
<line x1="1016.8" y1="371.3" x2="1016.8" y2="375.8" stroke="#9a9a9a" stroke-width="0.5"/>
<line x1="1018.7" y1="372.2" x2="1018.7" y2="376.7" stroke="#9a9a9a" stroke-width="0.5"/>
<line x1="1020.6" y1="373.1" x2="1020.6" y2="377.6" stroke="#9a9a9a" stroke-width="0.5"/>
<line x1="1022.5" y1="374.0" x2="1022.5" y2="378.5" stroke="#9a9a9a" stroke-width="0.5"/>
<line x1="1024.4" y1="374.9" x2="1024.4" y2="379.4" stroke="#9a9a9a" stroke-width="0.5"/>
<line x1="1026.3" y1="375.8" x2="1026.3" y2="380.3" stroke="#9a9a9a" stroke-width="0.5"/>
<line x1="1028.2" y1="376.7" x2="1028.2" y2="381.2" stroke="#9a9a9a" stroke-width="0.5"/>
<line x1="857.0" y1="453.0" x2="886.0" y2="437.0" stroke="#f2e23c" stroke-width="1.5" stroke-dasharray="4 3"/>
<line x1="872.0" y1="466.0" x2="905.0" y2="447.8" stroke="#f2e23c" stroke-width="1.2" stroke-dasharray="3 4 1.5 3"/>
<line x1="905.0" y1="424.0" x2="1004.0" y2="369.4" stroke="#f2e23c" stroke-width="1.3" stroke-dasharray="5 3 2 3"/>
<line x1="897.0" y1="446.0" x2="1012.0" y2="382.5" stroke="#f2e23c" stroke-width="1.2" stroke-dasharray="3 4 6 3"/>
<line x1="886.0" y1="452.0" x2="930.0" y2="427.7" stroke="#f2e23c" stroke-width="1.1" stroke-dasharray="3 3 1.5 4"/>
<line x1="940.0" y1="402.0" x2="1000.0" y2="368.9" stroke="#f2e23c" stroke-width="1.0" stroke-dasharray="2 4"/>
<line x1="985.0" y1="393.0" x2="1028.0" y2="369.3" stroke="#22c777" stroke-width="2.4" stroke-dasharray="5 3 2 2"/>
<line x1="955.0" y1="401.0" x2="992.0" y2="380.6" stroke="#4fbf73" stroke-width="1.8" stroke-dasharray="3 4"/>
<line x1="1000.0" y1="380.0" x2="1026.0" y2="365.6" stroke="#4fbf73" stroke-width="1.6" stroke-dasharray="2 3"/>
<circle cx="995.2" cy="395.8" r="1.38" fill="#1616c4"/>
<circle cx="957.3" cy="398.4" r="1.21" fill="#1616c4"/>
<circle cx="959.4" cy="399.8" r="0.63" fill="#1616c4"/>
<circle cx="991.4" cy="405.3" r="1.06" fill="#1616c4"/>
<circle cx="1004.3" cy="396.3" r="1.16" fill="#1616c4"/>
<circle cx="986.9" cy="401.6" r="0.96" fill="#1616c4"/>
<circle cx="1002.1" cy="408.9" r="0.98" fill="#1616c4"/>
<circle cx="991.2" cy="391.2" r="1.16" fill="#1616c4"/>
<circle cx="990.1" cy="409.9" r="1.26" fill="#1616c4"/>
<circle cx="967.6" cy="397.7" r="1.13" fill="#1616c4"/>
<circle cx="951.4" cy="399.2" r="0.73" fill="#1616c4"/>
<circle cx="957.3" cy="391.2" r="1.21" fill="#1616c4"/>
<circle cx="958.0" cy="395.0" r="0.91" fill="#1616c4"/>
<circle cx="1004.0" cy="391.6" r="0.96" fill="#1616c4"/>
<circle cx="984.1" cy="407.7" r="1.26" fill="#1616c4"/>
<circle cx="1003.6" cy="395.6" r="0.93" fill="#1616c4"/>
<circle cx="972.2" cy="407.7" r="1.37" fill="#1616c4"/>
<circle cx="959.4" cy="393.5" r="0.79" fill="#1616c4"/>
<circle cx="964.5" cy="399.7" r="1.07" fill="#1616c4"/>
<circle cx="966.3" cy="390.1" r="0.94" fill="#1616c4"/>
<circle cx="972.9" cy="401.3" r="1.36" fill="#1616c4"/>
<circle cx="992.8" cy="400.3" r="1.09" fill="#1616c4"/>
<circle cx="991.9" cy="391.1" r="1.32" fill="#1616c4"/>
<circle cx="998.4" cy="407.5" r="1.24" fill="#1616c4"/>
<circle cx="974.3" cy="398.0" r="0.68" fill="#1616c4"/>
<circle cx="989.3" cy="391.2" r="0.65" fill="#1616c4"/>
<circle cx="962.9" cy="393.2" r="0.87" fill="#1616c4"/>
<circle cx="953.3" cy="390.0" r="0.72" fill="#1616c4"/>
<circle cx="956.3" cy="397.3" r="0.62" fill="#1616c4"/>
<circle cx="1004.2" cy="402.3" r="0.72" fill="#1616c4"/>
<circle cx="1009.8" cy="387.9" r="0.85" fill="#1616c4"/>
<circle cx="1006.3" cy="394.9" r="1.3" fill="#1616c4"/>
<circle cx="1015.6" cy="389.8" r="0.66" fill="#1616c4"/>
<circle cx="1005.8" cy="387.8" r="0.79" fill="#1616c4"/>
<circle cx="1025.4" cy="385.3" r="0.62" fill="#1616c4"/>
<circle cx="1028.7" cy="390.4" r="0.7" fill="#1616c4"/>
<circle cx="1017.7" cy="383.4" r="0.97" fill="#1616c4"/>
<circle cx="1029.4" cy="395.1" r="1.09" fill="#1616c4"/>
<circle cx="1010.1" cy="388.1" r="0.72" fill="#1616c4"/>
<circle cx="1023.8" cy="390.5" r="1.15" fill="#1616c4"/>
<circle cx="1011.9" cy="386.1" r="1.17" fill="#1616c4"/>
<circle cx="1029.6" cy="394.9" r="1.16" fill="#1616c4"/>
<circle cx="1025.1" cy="393.4" r="0.76" fill="#1616c4"/>
<circle cx="1017.0" cy="388.0" r="0.62" fill="#1616c4"/>
<circle cx="1003.8" cy="386.9" r="0.78" fill="#1616c4"/>
<circle cx="1021.7" cy="396.4" r="0.91" fill="#1616c4"/>
<circle cx="1028.3" cy="396.8" r="1.27" fill="#1616c4"/>
<circle cx="1012.8" cy="386.1" r="0.76" fill="#1616c4"/>
<circle cx="961.8" cy="395.3" r="0.81" fill="#1a1a1a"/>
<circle cx="1004.0" cy="405.4" r="0.74" fill="#1a1a1a"/>
<circle cx="989.2" cy="404.8" r="0.54" fill="#1a1a1a"/>
<circle cx="989.6" cy="406.6" r="0.89" fill="#1a1a1a"/>
<circle cx="995.0" cy="399.6" r="0.59" fill="#1a1a1a"/>
<circle cx="997.3" cy="397.3" r="0.9" fill="#1a1a1a"/>
<circle cx="1008.3" cy="398.3" r="0.7" fill="#1a1a1a"/>
<circle cx="1006.8" cy="403.6" r="0.59" fill="#1a1a1a"/>
<circle cx="957.6" cy="394.4" r="0.95" fill="#1a1a1a"/>
<circle cx="998.4" cy="394.3" r="0.91" fill="#1a1a1a"/>
<line x1="1033.5" y1="388.0" x2="905.0" y2="458.2" stroke="#22c777" stroke-width="5.8"/>
<ellipse cx="906.0" cy="459.4" rx="2.6" ry="2.2" fill="#1616c4" transform="rotate(0 906.0 459.4)"/>
<line x1="1033.5" y1="388.0" x2="1022.0" y2="394.3" stroke="#6fdc8c" stroke-width="5.8"/>
<ellipse cx="1035.3" cy="387.3" rx="2.7" ry="2.3" fill="#1616c4" transform="rotate(0 1035.3 387.3)"/>
<line x1="905.0" y1="465.2" x2="1024.0" y2="399.5" stroke="#f2e23c" stroke-width="1.6"/>
<line x1="1031.6" y1="390.8" x2="1055.0" y2="403.8" stroke="#f2e23c" stroke-width="2.5"/>
<line x1="1019.6" y1="397.6" x2="1041.6" y2="397.0" stroke="#f2e23c" stroke-width="1.1"/>
<line x1="1000.0" y1="408.0" x2="1013.0" y2="415.5" stroke="#f2e23c" stroke-width="1.0"/>
<line x1="968.0" y1="425.0" x2="995.0" y2="422.0" stroke="#f2e23c" stroke-width="1.0"/>
<line x1="940.0" y1="441.0" x2="968.0" y2="438.0" stroke="#f2e23c" stroke-width="1.0"/>
<line x1="912.0" y1="456.0" x2="940.0" y2="453.0" stroke="#f2e23c" stroke-width="1.0"/>
<line x1="985.0" y1="416.0" x2="998.0" y2="424.0" stroke="#f2e23c" stroke-width="1.0"/>
<line x1="955.0" y1="432.0" x2="968.0" y2="440.0" stroke="#f2e23c" stroke-width="1.0"/>
<line x1="928.0" y1="447.0" x2="942.0" y2="455.0" stroke="#f2e23c" stroke-width="1.0"/>
<line x1="996.0" y1="408.4" x2="1013.0" y2="418.6" stroke="#f2e23c" stroke-width="2.6"/>
<line x1="967.6" y1="426.0" x2="981.0" y2="434.0" stroke="#f2e23c" stroke-width="2.6"/>
<line x1="941.0" y1="440.5" x2="954.0" y2="448.3" stroke="#f2e23c" stroke-width="2.6"/>
<line x1="913.0" y1="455.5" x2="927.0" y2="463.9" stroke="#f2e23c" stroke-width="2.6"/>
<line x1="1021.0" y1="396.0" x2="1034.0" y2="403.8" stroke="#f2e23c" stroke-width="2.6"/>
<line x1="1012.0" y1="405.5" x2="1029.5" y2="416.0" stroke="#f3f378" stroke-width="5.5" stroke-linecap="round"/>
<ellipse cx="1030.1" cy="417.0" rx="2.5" ry="3.7" fill="none" stroke="#1616c4" stroke-width="1.7" transform="rotate(28 1030.1 417.0)"/>
<line x1="1004.0" y1="411.0" x2="1021.5" y2="421.5" stroke="#f3f378" stroke-width="6.2" stroke-linecap="round"/>
<ellipse cx="1022.1" cy="422.5" rx="2.5" ry="3.7" fill="none" stroke="#1616c4" stroke-width="1.7" transform="rotate(28 1022.1 422.5)"/>
<line x1="974.0" y1="424.5" x2="993.5" y2="436.2" stroke="#f3f378" stroke-width="6.2" stroke-linecap="round"/>
<ellipse cx="994.1" cy="437.2" rx="2.5" ry="3.7" fill="none" stroke="#1616c4" stroke-width="1.7" transform="rotate(28 994.1 437.2)"/>
<line x1="962.0" y1="433.0" x2="977.0" y2="442.0" stroke="#f3f378" stroke-width="5.2" stroke-linecap="round"/>
<ellipse cx="977.6" cy="443.0" rx="2.5" ry="3.7" fill="none" stroke="#1616c4" stroke-width="1.7" transform="rotate(28 977.6 443.0)"/>
<line x1="950.0" y1="434.0" x2="966.5" y2="443.9" stroke="#f3f378" stroke-width="6.2" stroke-linecap="round"/>
<ellipse cx="967.1" cy="444.9" rx="2.5" ry="3.7" fill="none" stroke="#1616c4" stroke-width="1.7" transform="rotate(28 967.1 444.9)"/>
<line x1="934.6" y1="461.2" x2="945.0" y2="467.4" stroke="#f3f378" stroke-width="6.2" stroke-linecap="round"/>
<ellipse cx="945.6" cy="468.4" rx="2.5" ry="3.7" fill="none" stroke="#1616c4" stroke-width="1.7" transform="rotate(28 945.6 468.4)"/>
<line x1="915.0" y1="457.0" x2="930.0" y2="466.0" stroke="#f3f378" stroke-width="5.5" stroke-linecap="round"/>
<line x1="924.0" y1="452.0" x2="936.0" y2="459.2" stroke="#f3f378" stroke-width="4.5" stroke-linecap="round"/>
<line x1="899.0" y1="478.3" x2="1042.0" y2="399.4" stroke="#f2e23c" stroke-width="3.0"/>
<line x1="1032.5" y1="404.9" x2="1032.5" y2="410.5" stroke="#7d7d7d" stroke-width="0.7"/>
<line x1="1035.7" y1="406.3" x2="1035.7" y2="411.9" stroke="#7d7d7d" stroke-width="0.7"/>
<line x1="1038.9" y1="407.7" x2="1038.9" y2="413.3" stroke="#7d7d7d" stroke-width="0.7"/>
<line x1="1042.1" y1="409.0" x2="1042.1" y2="414.6" stroke="#7d7d7d" stroke-width="0.7"/>
<line x1="1045.3" y1="410.4" x2="1045.3" y2="416.0" stroke="#7d7d7d" stroke-width="0.7"/>
<line x1="1048.5" y1="411.8" x2="1048.5" y2="417.4" stroke="#7d7d7d" stroke-width="0.7"/>
<line x1="1051.7" y1="413.2" x2="1051.7" y2="418.8" stroke="#7d7d7d" stroke-width="0.7"/>
<line x1="1032.0" y1="404.7" x2="1052.5" y2="413.5" stroke="#7d7d7d" stroke-width="0.8"/>
<line x1="1031.0" y1="407.4" x2="1052.0" y2="416.2" stroke="#8a8a8a" stroke-width="0.6"/>
<line x1="1060.8" y1="405.0" x2="1060.8" y2="418.0" stroke="#4fbf73" stroke-width="1.2"/>
<ellipse cx="1016.0" cy="458.0" rx="11" ry="5.3" fill="#f3f378" transform="rotate(-8 1016.0 458.0)"/>
<circle cx="1025.7" cy="461.7" r="2.5" fill="#1616c4"/>
<ellipse cx="1036.5" cy="447.0" rx="10" ry="4.8" fill="#f3f378" transform="rotate(-8 1036.5 447.0)"/>
<circle cx="1043.6" cy="449.0" r="2.1" fill="#1616c4"/>
<circle cx="1043.5" cy="454.3" r="1.3" fill="#e070c0"/>
<circle cx="994.3" cy="469.0" r="3.1" fill="#f3f378"/>
<circle cx="995.4" cy="469.6" r="2.2" fill="#1616c4"/>
<line x1="964.6" y1="483.0" x2="979.0" y2="483.5" stroke="#b98ae8" stroke-width="2.0"/>
<circle cx="978.0" cy="483.5" r="2.8" fill="#f3f378"/>
<circle cx="979.6" cy="484.0" r="2.0" fill="#1616c4"/>
<rect x="968.0" y="481.0" width="6.0" height="3.0" fill="#f3f378"/>
<polygon points="997.0,492.5 1001.0,491.5 1002.0,489.5 1003.0,492.0 998.0,494.0" fill="#fff"/>
<line x1="1056.0" y1="402.8" x2="1056.0" y2="429.7" stroke="#4fbf73" stroke-width="2.5"/>
<rect x="1054.2" y="428.5" width="3.7" height="1.8" fill="#4fbf73"/>
<line x1="1049.8" y1="430.7" x2="1049.8" y2="457.6" stroke="#4fbf73" stroke-width="3.4"/>
<rect x="1047.5" y="456.4" width="4.6" height="1.8" fill="#4fbf73"/>
<line x1="1019.0" y1="448.4" x2="1019.0" y2="475.2" stroke="#4fbf73" stroke-width="3.4"/>
<rect x="1016.7" y="474.0" width="4.6" height="1.8" fill="#4fbf73"/>
<line x1="958.2" y1="484.0" x2="958.2" y2="511.0" stroke="#4fbf73" stroke-width="3"/>
<rect x="956.1" y="509.8" width="4.2" height="1.8" fill="#4fbf73"/>
<line x1="927.0" y1="499.4" x2="927.0" y2="528.0" stroke="#4fbf73" stroke-width="3.4"/>
<rect x="924.7" y="526.8" width="4.6" height="1.8" fill="#4fbf73"/>
<line x1="982.2" y1="434.5" x2="982.2" y2="454.4" stroke="#4fbf73" stroke-width="2.4"/>
<rect x="980.4" y="453.2" width="3.6" height="1.8" fill="#4fbf73"/>
<line x1="1012.9" y1="419.0" x2="1012.9" y2="433.7" stroke="#4fbf73" stroke-width="2.4"/>
<rect x="1011.1" y="432.5" width="3.6" height="1.8" fill="#4fbf73"/>
<line x1="950.7" y1="451.4" x2="950.7" y2="472.9" stroke="#4fbf73" stroke-width="2.6"/>
<rect x="948.8" y="471.7" width="3.8" height="1.8" fill="#4fbf73"/>
<line x1="987.5" y1="468.3" x2="987.5" y2="482.0" stroke="#4fbf73" stroke-width="2.6"/>
<rect x="985.6" y="480.8" width="3.8" height="1.8" fill="#4fbf73"/>
<line x1="933.0" y1="477.5" x2="933.0" y2="497.5" stroke="#4fbf73" stroke-width="2.2"/>
<rect x="931.3" y="496.3" width="3.4" height="1.8" fill="#4fbf73"/>
<line x1="895.0" y1="482.0" x2="895.0" y2="504.5" stroke="#4fbf73" stroke-width="3"/>
<rect x="892.9" y="503.3" width="4.2" height="1.8" fill="#4fbf73"/>
<line x1="889.8" y1="454.0" x2="889.8" y2="481.5" stroke="#4fbf73" stroke-width="2.5"/>
<rect x="887.9" y="480.3" width="3.7" height="1.8" fill="#4fbf73"/>
<line x1="848.3" y1="449.0" x2="848.3" y2="482.4" stroke="#4fbf73" stroke-width="2.5"/>
<rect x="846.4" y="481.2" width="3.7" height="1.8" fill="#4fbf73"/>
<line x1="871.0" y1="430.0" x2="871.0" y2="449.0" stroke="#4fbf73" stroke-width="2.0"/>
<rect x="869.4" y="447.8" width="3.2" height="1.8" fill="#4fbf73"/>
<line x1="933.3" y1="474.0" x2="933.3" y2="497.5" stroke="#4fbf73" stroke-width="2.2"/>
<rect x="931.6" y="496.3" width="3.4" height="1.8" fill="#4fbf73"/>
<line x1="915.0" y1="464.0" x2="915.0" y2="481.0" stroke="#4fbf73" stroke-width="2.2"/>
<rect x="913.3" y="479.8" width="3.4" height="1.8" fill="#4fbf73"/>
<line x1="1000.0" y1="428.0" x2="1000.0" y2="450.0" stroke="#4fbf73" stroke-width="2.2"/>
<rect x="998.3" y="448.8" width="3.4" height="1.8" fill="#4fbf73"/>
<polygon points="860.0,470.0 863.0,470.0 867.0,491.0 864.0,491.5" fill="#4fbf73"/>
<line x1="896.5" y1="433.0" x2="896.5" y2="452.0" stroke="#4fbf73" stroke-width="2.0"/>
<rect x="894.9" y="450.8" width="3.2" height="1.8" fill="#4fbf73"/>
<line x1="929.5" y1="501.3" x2="959.5" y2="486.6" stroke="#f2e23c" stroke-width="2.6"/>
<line x1="934.0" y1="502.0" x2="945.0" y2="508.6" stroke="#f3f378" stroke-width="4.2" stroke-linecap="round"/>
<ellipse cx="946.7" cy="508.4" rx="2.2" ry="2.6" fill="none" stroke="#1616c4" stroke-width="1.5" transform="rotate(0 946.7 508.4)"/>
<circle cx="946.7" cy="508.4" r="1.0" fill="#f3f378"/>
<rect x="938.5" y="506.5" width="3.0" height="2.0" fill="#e3a323"/>
<line x1="921.0" y1="470.0" x2="933.3" y2="474.5" stroke="#f2e23c" stroke-width="2.0"/>
<line x1="889.0" y1="481.5" x2="905.8" y2="487.3" stroke="#f2e23c" stroke-width="1.6"/>
<rect x="932.0" y="508.5" width="4.5" height="1.5" fill="#fff"/>
<line x1="852.4" y1="464.5" x2="858.8" y2="468.4" stroke="#f2e23c" stroke-width="1.6"/>
<rect x="866.0" y="460.5" width="3.5" height="1.8" fill="#f2e23c"/>
<path d="M875.5 473 Q880.5 471.5 883 477 L892.5 503" fill="none" stroke="#b98ae8" stroke-width="2.6"/>
<line x1="866.5" y1="484.0" x2="864.5" y2="489.0" stroke="#b98ae8" stroke-width="2.2"/>
<ellipse cx="909.6" cy="504.0" rx="5" ry="2.2" fill="#2a1040" transform="rotate(-22 909.6 504.0)"/>
<circle cx="910.5" cy="503.0" r="1.8" fill="#1616c4"/>
<rect x="913.5" y="493.0" width="3.0" height="6.5" fill="#22c777"/>
<rect x="908.0" y="494.0" width="3.5" height="2.5" fill="#d8829a"/>
<rect x="904.0" y="506.0" width="3.0" height="4.5" fill="#22c777"/>
<rect x="900.0" y="507.0" width="3.0" height="2.0" fill="#fff"/>
<rect x="911.0" y="508.0" width="1.5" height="4.0" fill="#fff"/>
<rect x="903.5" y="512.0" width="1.2" height="3.0" fill="#fff"/>
<rect x="896.0" y="500.0" width="2.0" height="1.5" fill="#fff"/>
<rect x="886.0" y="511.0" width="2.5" height="1.5" fill="#fff"/>
<rect x="905.0" y="497.0" width="2.0" height="1.2" fill="#fff"/>
<rect x="920.0" y="517.0" width="1.5" height="1.0" fill="#fff"/>
<ellipse cx="834.5" cy="465.0" rx="3.2" ry="4.2" fill="#e3a323" transform="rotate(0 834.5 465.0)"/>
<circle cx="836.4" cy="476.0" r="1.6" fill="#e3a323"/>
<circle cx="837.9" cy="473.3" r="0.64" fill="#e3a323"/>
<circle cx="835.3" cy="469.0" r="0.51" fill="#e3a323"/>
<circle cx="837.8" cy="473.2" r="0.71" fill="#e3a323"/>
<circle cx="837.6" cy="471.5" r="0.85" fill="#e3a323"/>
<circle cx="837.0" cy="469.7" r="0.6" fill="#e3a323"/>
<circle cx="833.8" cy="469.9" r="0.73" fill="#e3a323"/>
<rect x="832.0" y="455.0" width="14.0" height="2.6" fill="#22c777"/>
<circle cx="843.0" cy="457.5" r="1.8" fill="#1616c4"/>
<circle cx="838.0" cy="458.0" r="1.5" fill="#111"/>
<circle cx="846.5" cy="456.0" r="1.5" fill="#1616c4"/>
<rect x="838.0" y="459.5" width="9.0" height="2.2" fill="#f3f378"/>
<circle cx="853.6" cy="471.4" r="0.65" fill="#1616c4"/>
<circle cx="857.5" cy="470.8" r="0.78" fill="#1616c4"/>
<circle cx="855.5" cy="475.2" r="0.77" fill="#1616c4"/>
<circle cx="857.5" cy="472.0" r="0.81" fill="#1616c4"/>
<circle cx="855.1" cy="468.1" r="0.78" fill="#1616c4"/>
<circle cx="853.1" cy="468.0" r="0.92" fill="#1616c4"/>
<rect x="853.5" y="470.0" width="2.5" height="2.0" fill="#b98ae8"/>
<circle cx="895.1" cy="410.6" r="0.94" fill="#1616c4"/>
<circle cx="899.7" cy="405.8" r="0.81" fill="#1616c4"/>
<circle cx="899.7" cy="420.9" r="0.56" fill="#1616c4"/>
<circle cx="899.7" cy="403.2" r="0.67" fill="#1616c4"/>
<circle cx="902.3" cy="411.8" r="0.84" fill="#1616c4"/>
<circle cx="902.1" cy="425.1" r="0.77" fill="#1616c4"/>
<circle cx="900.4" cy="411.7" r="0.81" fill="#1616c4"/>
<circle cx="901.3" cy="409.9" r="0.82" fill="#1616c4"/>
<circle cx="898.7" cy="426.1" r="0.92" fill="#1616c4"/>
<circle cx="903.5" cy="426.1" r="0.66" fill="#1616c4"/>
<circle cx="899.7" cy="426.1" r="1.0" fill="#1616c4"/>
<circle cx="894.6" cy="399.0" r="0.77" fill="#1616c4"/>
<circle cx="893.9" cy="402.9" r="0.54" fill="#1616c4"/>
<circle cx="901.0" cy="420.9" r="1.04" fill="#1616c4"/>
<circle cx="894.9" cy="418.6" r="0.9" fill="#1616c4"/>
<circle cx="894.7" cy="424.1" r="1.08" fill="#1616c4"/>
<circle cx="895.6" cy="426.4" r="0.74" fill="#1616c4"/>
<circle cx="898.8" cy="427.7" r="1.0" fill="#1616c4"/>
<circle cx="894.9" cy="409.2" r="0.81" fill="#1616c4"/>
<circle cx="897.1" cy="401.5" r="0.69" fill="#1616c4"/>
<circle cx="901.7" cy="395.6" r="0.83" fill="#1616c4"/>
<circle cx="898.3" cy="395.6" r="0.7" fill="#1616c4"/>
<circle cx="899.0" cy="403.0" r="2.0" fill="#1616c4"/>
<circle cx="896.5" cy="411.0" r="1.6" fill="#1616c4"/>
<circle cx="923.7" cy="449.5" r="0.65" fill="#1616c4"/>
<circle cx="934.6" cy="461.1" r="1.38" fill="#1616c4"/>
<circle cx="908.1" cy="439.2" r="0.63" fill="#1616c4"/>
<circle cx="928.4" cy="439.4" r="0.7" fill="#1616c4"/>
<circle cx="917.7" cy="466.3" r="1.26" fill="#1616c4"/>
<circle cx="912.8" cy="434.3" r="1.34" fill="#1616c4"/>
<circle cx="922.1" cy="457.4" r="0.67" fill="#1616c4"/>
<circle cx="906.7" cy="456.9" r="0.94" fill="#1616c4"/>
<circle cx="907.2" cy="467.4" r="1.11" fill="#1616c4"/>
<circle cx="929.0" cy="431.5" r="1.28" fill="#1616c4"/>
<circle cx="907.0" cy="464.2" r="0.96" fill="#1616c4"/>
<circle cx="915.2" cy="451.2" r="1.34" fill="#1616c4"/>
<circle cx="913.0" cy="433.4" r="1.02" fill="#1616c4"/>
<circle cx="912.2" cy="432.6" r="0.73" fill="#1616c4"/>
<circle cx="906.5" cy="436.5" r="0.85" fill="#1616c4"/>
<circle cx="914.2" cy="459.9" r="0.83" fill="#1616c4"/>
<circle cx="920.0" cy="435.5" r="0.88" fill="#1616c4"/>
<circle cx="905.5" cy="438.5" r="0.61" fill="#1616c4"/>
<circle cx="927.0" cy="451.1" r="0.75" fill="#1616c4"/>
<circle cx="919.2" cy="467.3" r="0.69" fill="#1616c4"/>
<circle cx="929.6" cy="446.2" r="1.0" fill="#1616c4"/>
<circle cx="930.0" cy="444.5" r="1.01" fill="#1616c4"/>
<circle cx="925.6" cy="469.3" r="0.87" fill="#1616c4"/>
<circle cx="930.0" cy="457.7" r="1.11" fill="#1616c4"/>
<circle cx="917.1" cy="442.6" r="0.64" fill="#1616c4"/>
<circle cx="908.9" cy="431.0" r="1.19" fill="#1616c4"/>
<circle cx="912.7" cy="434.9" r="0.67" fill="#1616c4"/>
<circle cx="930.2" cy="464.6" r="1.14" fill="#1616c4"/>
<circle cx="913.5" cy="438.2" r="0.83" fill="#1616c4"/>
<circle cx="918.8" cy="434.6" r="0.96" fill="#1616c4"/>
<circle cx="955.8" cy="468.9" r="1.18" fill="#1616c4"/>
<circle cx="972.8" cy="447.3" r="1.18" fill="#1616c4"/>
<circle cx="958.6" cy="450.7" r="0.6" fill="#1616c4"/>
<circle cx="962.9" cy="454.2" r="0.9" fill="#1616c4"/>
<circle cx="952.1" cy="455.1" r="0.6" fill="#1616c4"/>
<circle cx="955.9" cy="442.7" r="0.84" fill="#1616c4"/>
<circle cx="942.5" cy="440.7" r="0.78" fill="#1616c4"/>
<circle cx="954.0" cy="457.6" r="0.92" fill="#1616c4"/>
<circle cx="985.0" cy="459.7" r="1.03" fill="#1616c4"/>
<circle cx="992.7" cy="451.7" r="0.8" fill="#1616c4"/>
<circle cx="999.1" cy="444.5" r="1.03" fill="#1616c4"/>
<circle cx="978.6" cy="441.3" r="1.1" fill="#1616c4"/>
<circle cx="993.5" cy="458.8" r="1.04" fill="#1616c4"/>
<circle cx="988.7" cy="444.2" r="0.91" fill="#1616c4"/>
<circle cx="1022.7" cy="440.9" r="1.08" fill="#1616c4"/>
<circle cx="1037.2" cy="434.6" r="1.14" fill="#1616c4"/>
<circle cx="1030.7" cy="437.3" r="0.74" fill="#1616c4"/>
<circle cx="1001.4" cy="423.3" r="0.82" fill="#1616c4"/>
<circle cx="1004.7" cy="440.9" r="0.94" fill="#1616c4"/>
<circle cx="1028.2" cy="435.7" r="1.01" fill="#1616c4"/>
<circle cx="1022.0" cy="420.1" r="1.08" fill="#1616c4"/>
<circle cx="1033.7" cy="432.6" r="0.92" fill="#1616c4"/>
<circle cx="1029.7" cy="421.7" r="1.04" fill="#1616c4"/>
<circle cx="1011.3" cy="421.9" r="0.76" fill="#1616c4"/>
<circle cx="1032.8" cy="425.1" r="1.04" fill="#1616c4"/>
<circle cx="1043.9" cy="432.3" r="0.83" fill="#1616c4"/>
<circle cx="1021.6" cy="437.1" r="1.06" fill="#1616c4"/>
<circle cx="1027.8" cy="436.1" r="0.65" fill="#1616c4"/>
<circle cx="875.2" cy="447.6" r="0.95" fill="#1616c4"/>
<circle cx="880.7" cy="457.0" r="0.51" fill="#1616c4"/>
<circle cx="872.1" cy="448.1" r="0.9" fill="#1616c4"/>
<circle cx="894.2" cy="460.3" r="0.67" fill="#1616c4"/>
<circle cx="888.1" cy="453.9" r="0.78" fill="#1616c4"/>
<circle cx="874.1" cy="466.8" r="0.62" fill="#1616c4"/>
<circle cx="904.2" cy="468.1" r="0.51" fill="#1616c4"/>
<circle cx="886.1" cy="464.6" r="1.08" fill="#1616c4"/>
<circle cx="885.7" cy="448.1" r="0.63" fill="#1616c4"/>
<circle cx="903.1" cy="446.3" r="0.85" fill="#1616c4"/>
<circle cx="875.0" cy="455.7" r="1.07" fill="#1616c4"/>
<circle cx="874.6" cy="464.6" r="0.81" fill="#1616c4"/>
<circle cx="901.0" cy="461.1" r="0.64" fill="#1616c4"/>
<circle cx="901.4" cy="454.6" r="0.51" fill="#1616c4"/>
<circle cx="935.1" cy="389.8" r="0.73" fill="#1616c4"/>
<circle cx="940.1" cy="382.8" r="0.67" fill="#1616c4"/>
<circle cx="940.4" cy="396.8" r="0.5" fill="#1616c4"/>
<circle cx="947.8" cy="396.8" r="0.56" fill="#1616c4"/>
<circle cx="950.7" cy="394.3" r="0.95" fill="#1616c4"/>
<circle cx="939.9" cy="387.4" r="0.7" fill="#1616c4"/>
<circle cx="952.0" cy="391.8" r="0.68" fill="#1616c4"/>
<circle cx="942.3" cy="385.5" r="0.52" fill="#1616c4"/>
<circle cx="936.7" cy="396.7" r="0.64" fill="#1616c4"/>
<circle cx="950.9" cy="385.0" r="0.63" fill="#1616c4"/>
<circle cx="943.7" cy="383.8" r="0.69" fill="#1616c4"/>
<circle cx="951.3" cy="397.7" r="0.91" fill="#1616c4"/>
<circle cx="982.1" cy="506.4" r="0.97" fill="#4fbf73"/>
<circle cx="979.2" cy="498.2" r="0.52" fill="#4fbf73"/>
<circle cx="985.6" cy="486.9" r="0.88" fill="#4fbf73"/>
<circle cx="982.6" cy="480.0" r="0.52" fill="#4fbf73"/>
<circle cx="992.4" cy="473.3" r="0.74" fill="#4fbf73"/>
<circle cx="972.0" cy="480.5" r="0.87" fill="#4fbf73"/>
<circle cx="994.2" cy="478.9" r="0.83" fill="#4fbf73"/>
<circle cx="970.5" cy="491.4" r="0.7" fill="#4fbf73"/>
<circle cx="965.9" cy="474.8" r="0.6" fill="#4fbf73"/>
<circle cx="991.7" cy="488.9" r="0.61" fill="#4fbf73"/>
<circle cx="991.7" cy="509.9" r="0.72" fill="#4fbf73"/>
<circle cx="964.9" cy="476.1" r="0.55" fill="#4fbf73"/>
<circle cx="972.0" cy="471.8" r="0.62" fill="#4fbf73"/>
<circle cx="969.0" cy="491.9" r="0.94" fill="#4fbf73"/>
<circle cx="986.2" cy="485.3" r="0.71" fill="#4fbf73"/>
<circle cx="978.3" cy="483.8" r="0.67" fill="#4fbf73"/>
<circle cx="962.2" cy="479.7" r="0.98" fill="#4fbf73"/>
<circle cx="964.4" cy="489.1" r="0.81" fill="#4fbf73"/>
<circle cx="990.2" cy="477.1" r="0.64" fill="#4fbf73"/>
<circle cx="968.7" cy="484.8" r="0.72" fill="#4fbf73"/>
<circle cx="993.4" cy="503.6" r="0.94" fill="#4fbf73"/>
<circle cx="960.8" cy="469.4" r="0.85" fill="#4fbf73"/>
<circle cx="1036.6" cy="468.6" r="0.79" fill="#4fbf73"/>
<circle cx="1025.0" cy="467.5" r="0.96" fill="#4fbf73"/>
<circle cx="1035.7" cy="474.0" r="0.99" fill="#4fbf73"/>
<circle cx="1028.2" cy="463.5" r="0.58" fill="#4fbf73"/>
<circle cx="1031.8" cy="471.5" r="0.97" fill="#4fbf73"/>
<circle cx="1034.4" cy="471.1" r="0.88" fill="#4fbf73"/>
<circle cx="1030.9" cy="469.7" r="0.52" fill="#4fbf73"/>
<circle cx="1035.2" cy="465.3" r="0.96" fill="#4fbf73"/>
<circle cx="1033.4" cy="466.3" r="0.56" fill="#4fbf73"/>
<circle cx="1028.3" cy="470.9" r="0.85" fill="#4fbf73"/>
<circle cx="885.6" cy="473.5" r="0.71" fill="#4fbf73"/>
<circle cx="909.1" cy="489.4" r="0.59" fill="#4fbf73"/>
<circle cx="910.1" cy="470.5" r="0.62" fill="#4fbf73"/>
<circle cx="903.0" cy="517.9" r="0.76" fill="#4fbf73"/>
<circle cx="924.2" cy="493.8" r="0.59" fill="#4fbf73"/>
<circle cx="892.4" cy="518.0" r="0.78" fill="#4fbf73"/>
<circle cx="895.4" cy="471.1" r="0.7" fill="#4fbf73"/>
<circle cx="913.7" cy="491.0" r="0.6" fill="#4fbf73"/>
<circle cx="913.4" cy="516.3" r="0.59" fill="#4fbf73"/>
<circle cx="881.7" cy="486.9" r="0.67" fill="#4fbf73"/>
<circle cx="914.1" cy="479.9" r="0.82" fill="#4fbf73"/>
<circle cx="917.0" cy="495.2" r="0.58" fill="#4fbf73"/>
<circle cx="1037.6" cy="459.4" r="0.83" fill="#b98ae8"/>
<circle cx="978.5" cy="456.6" r="0.8" fill="#b98ae8"/>
<circle cx="983.6" cy="478.6" r="0.7" fill="#b98ae8"/>
<circle cx="975.0" cy="456.7" r="0.67" fill="#b98ae8"/>
<circle cx="1013.2" cy="478.5" r="0.56" fill="#b98ae8"/>
<circle cx="991.5" cy="456.4" r="0.89" fill="#b98ae8"/>
<circle cx="971.4" cy="451.6" r="0.52" fill="#b98ae8"/>
<circle cx="991.5" cy="476.9" r="0.85" fill="#b98ae8"/>
<circle cx="923.0" cy="469.9" r="0.97" fill="#1a1a1a"/>
<circle cx="904.8" cy="445.6" r="0.97" fill="#1a1a1a"/>
<circle cx="923.6" cy="441.0" r="0.83" fill="#1a1a1a"/>
<circle cx="907.0" cy="451.2" r="0.67" fill="#1a1a1a"/>
<circle cx="897.6" cy="440.1" r="0.64" fill="#1a1a1a"/>
<circle cx="905.8" cy="468.7" r="0.56" fill="#1a1a1a"/>
<circle cx="933.4" cy="446.2" r="0.68" fill="#1a1a1a"/>
<circle cx="927.0" cy="464.7" r="0.72" fill="#1a1a1a"/>
<circle cx="892.2" cy="454.2" r="0.69" fill="#1a1a1a"/>
<circle cx="931.4" cy="445.8" r="0.68" fill="#1a1a1a"/>
<circle cx="930.4" cy="440.9" r="0.71" fill="#1a1a1a"/>
<circle cx="926.5" cy="463.0" r="0.52" fill="#1a1a1a"/>
<circle cx="891.6" cy="441.9" r="0.96" fill="#1a1a1a"/>
<circle cx="901.6" cy="462.4" r="0.95" fill="#1a1a1a"/>
<circle cx="905.3" cy="448.2" r="0.98" fill="#1a1a1a"/>
<circle cx="917.8" cy="447.9" r="0.86" fill="#1a1a1a"/>
<circle cx="904.2" cy="448.3" r="0.5" fill="#1a1a1a"/>
<circle cx="924.0" cy="467.5" r="0.82" fill="#1a1a1a"/>
<line x1="894.0" y1="452.7" x2="916.7" y2="464.0" stroke="#f2e23c" stroke-width="2.4"/>
<line x1="929.5" y1="459.0" x2="946.0" y2="468.9" stroke="#f3f378" stroke-width="6.0" stroke-linecap="round"/>
<ellipse cx="946.6" cy="469.9" rx="2.5" ry="3.7" fill="none" stroke="#1616c4" stroke-width="1.7" transform="rotate(28 946.6 469.9)"/>
<line x1="902.8" y1="454.4" x2="936.0" y2="475.4" stroke="#f2e23c" stroke-width="2.2"/>
<line x1="886.0" y1="462.0" x2="902.0" y2="472.0" stroke="#f2e23c" stroke-width="1.6"/>
<line x1="880.0" y1="445.0" x2="898.0" y2="455.5" stroke="#22c777" stroke-width="2.4"/>
<line x1="858.0" y1="452.0" x2="872.0" y2="460.0" stroke="#22c777" stroke-width="1.6"/>
<rect x="884.0" y="448.0" width="9.0" height="4.0" fill="#22c777"/>
<rect x="893.0" y="452.0" width="7.0" height="3.0" fill="#101060"/>
<line x1="871.6" y1="430.0" x2="889.5" y2="435.0" stroke="#22c777" stroke-width="2.4"/>
<line x1="886.0" y1="440.0" x2="912.0" y2="455.0" stroke="#22c777" stroke-width="2.2"/>
<line x1="905.0" y1="449.0" x2="920.0" y2="441.0" stroke="#22c777" stroke-width="1.8"/>
<circle cx="928.3" cy="440.5" r="0.86" fill="#22c777"/>
<circle cx="914.3" cy="461.0" r="1.37" fill="#22c777"/>
<circle cx="911.6" cy="445.5" r="1.0" fill="#22c777"/>
<circle cx="914.8" cy="460.4" r="0.83" fill="#22c777"/>
<circle cx="924.1" cy="456.2" r="1.28" fill="#22c777"/>
<circle cx="923.2" cy="453.4" r="0.93" fill="#22c777"/>
<circle cx="909.6" cy="448.0" r="1.25" fill="#22c777"/>
<circle cx="902.4" cy="444.3" r="1.23" fill="#22c777"/>
<circle cx="907.4" cy="441.4" r="0.72" fill="#22c777"/>
<circle cx="916.6" cy="447.2" r="1.39" fill="#22c777"/>
<circle cx="926.5" cy="461.7" r="0.89" fill="#22c777"/>
<circle cx="902.5" cy="442.1" r="1.05" fill="#22c777"/>
<circle cx="921.3" cy="449.8" r="0.86" fill="#22c777"/>
<circle cx="912.5" cy="453.6" r="1.17" fill="#22c777"/>
<circle cx="922.4" cy="458.6" r="1.17" fill="#22c777"/>
<circle cx="903.6" cy="458.5" r="0.91" fill="#22c777"/>
</svg>
<div id="dlg" class="abs">
<div id="dtitle" class="abs"></div>
<svg class="abs" style="left:4.6px;top:3.6px" width="11" height="11" viewBox="0 0 11 11">
<rect x="0.3" y="0.3" width="10.4" height="10.4" rx="2.2" fill="#65a4da"/>
<path d="M7.4 1.6 L3.4 5.5 L7.4 9.4 L7.4 7.2 L5.8 5.5 L7.4 3.8 Z" fill="#fff"/>
<path d="M7.4 1.6 L8.6 2.4 L8.6 8.6 L7.4 9.4 Z" fill="#cfe3f6"/>
</svg>
<div class="t" style="left:18.60px;top:3.10px;font-size:8.3px;letter-spacing:-0.287px;color:#222;">Point Cloud Classifications</div>
<svg class="abs" style="left:350.2px;top:5.4px" width="9" height="9" viewBox="0 0 9 9"><path d="M1.1 1.1 L7.5 7.7 M7.5 1.1 L1.1 7.7" stroke="#2c2c2c" stroke-width="0.85" fill="none"/></svg>
<div id="lv" class="abs">
<div class="abs" style="left:0;top:0;width:166px;height:11.5px;background:#fff"></div>
<div class="abs" style="left:40.8px;top:0;width:1px;height:11px;background:#e5e5e5"></div>
<div class="abs" style="left:61.9px;top:0;width:1px;height:11px;background:#e5e5e5"></div>
<div class="abs" style="left:125.1px;top:0;width:1px;height:11px;background:#e5e5e5"></div>
<div class="abs" style="left:146px;top:0;width:1px;height:11px;background:#e5e5e5"></div>
<div class="abs" style="left:166.2px;top:0;width:1px;height:11px;background:#e5e5e5"></div>
<div class="lr lh" style="top:1.6px"><span class="c1">Model</span><span class="c2">Ind...</span><span class="c3">Category</span><span style="left:128.5px">Sh...</span><span style="left:149.4px">Co...</span></div>
<div id="sel" class="abs"></div>
<div class="lr" style="top:13.00px"><span class="c1">Plant 2.0</span><span class="c2">0</span><span class="c3" style="letter-spacing:-0.056px">Created, never c...</span></div>
<div class="ck" style="top:12.20px"></div>
<div class="sw" style="top:12.60px;background:#4a4a4a"></div>
<div class="lr" style="top:23.41px"><span class="c1">Plant 2.0</span><span class="c2">1</span><span class="c3" style="letter-spacing:0.092px">Unclassified</span></div>
<div class="ck" style="top:22.61px"></div>
<div class="sw" style="top:23.01px;background:#7d7d7d"></div>
<div class="lr" style="top:33.82px"><span class="c1">Plant 2.0</span><span class="c2">2</span><span class="c3" style="letter-spacing:-0.002px">Ground</span></div>
<div class="ck" style="top:33.02px"></div>
<div class="sw" style="top:33.42px;background:#6b3a10"></div>
<div class="lr" style="top:44.23px"><span class="c1">Plant 2.0</span><span class="c2">3</span><span class="c3" style="letter-spacing:0.058px">Low Vegetation</span></div>
<div class="ck" style="top:43.43px"></div>
<div class="sw" style="top:43.83px;background:#08a010"></div>
<div class="lr" style="top:54.64px"><span class="c1">Plant 2.0</span><span class="c2">4</span><span class="c3" style="letter-spacing:0.046px">Medium Vegetat...</span></div>
<div class="ck" style="top:53.84px"></div>
<div class="sw" style="top:54.24px;background:#0a700e"></div>
<div class="lr" style="top:65.05px"><span class="c1">Plant 2.0</span><span class="c2">5</span><span class="c3" style="letter-spacing:0.092px">High Vegetation</span></div>
<div class="ck" style="top:64.25px"></div>
<div class="sw" style="top:64.65px;background:#0a420a"></div>
<div class="lr" style="top:75.46px"><span class="c1">Plant 2.0</span><span class="c2">6</span><span class="c3" style="letter-spacing:0.056px">Building</span></div>
<div class="ck" style="top:74.66px"></div>
<div class="sw" style="top:75.06px;background:#ff0000"></div>
<div class="lr" style="top:85.87px"><span class="c1">Plant 2.0</span><span class="c2">7</span><span class="c3" style="letter-spacing:-0.009px">Low Point (Noise)</span></div>
<div class="ck" style="top:85.07px"></div>
<div class="sw" style="top:85.47px;background:#b32cf0"></div>
<div class="lr" style="top:96.28px"><span class="c1">Plant 2.0</span><span class="c2">8</span><span class="c3" style="letter-spacing:0.221px">Reserved</span></div>
<div class="ck" style="top:95.48px"></div>
<div class="sw" style="top:95.88px;background:#ff10f0"></div>
<div class="lr" style="top:106.69px"><span class="c1">Plant 2.0</span><span class="c2">9</span><span class="c3" style="letter-spacing:0.131px">Water</span></div>
<div class="ck" style="top:105.89px"></div>
<div class="sw" style="top:106.29px;background:#0a0aa8"></div>
<div class="lr" style="top:117.10px"><span class="c1">Plant 2.0</span><span class="c2">10</span><span class="c3" style="letter-spacing:0.153px">Rail</span></div>
<div class="ck" style="top:116.30px"></div>
<div class="sw" style="top:116.70px;background:#f9a886"></div>
<div class="lr" style="top:127.51px"><span class="c1">Plant 2.0</span><span class="c2">11</span><span class="c3" style="letter-spacing:0.084px">Road Surface</span></div>
<div class="ck" style="top:126.71px"></div>
<div class="sw" style="top:127.11px;background:#a9a9a9"></div>
<div class="lr" style="top:137.92px"><span class="c1">Plant 2.0</span><span class="c2">12</span><span class="c3" style="letter-spacing:0.221px">Reserved</span></div>
<div class="ck" style="top:137.12px"></div>
<div class="sw" style="top:137.52px;background:#ff10f0"></div>
<div class="lr" style="top:148.33px"><span class="c1">Plant 2.0</span><span class="c2">13</span><span class="c3" style="letter-spacing:-0.041px">Wire - Guard</span></div>
<div class="ck" style="top:147.53px"></div>
<div class="sw" style="top:147.93px;background:#86860c"></div>
<div class="lr" style="top:158.74px"><span class="c1">Plant 2.0</span><span class="c2">14</span><span class="c3" style="letter-spacing:-0.015px">Wire - Conductor</span></div>
<div class="ck" style="top:157.94px"></div>
<div class="sw" style="top:158.34px;background:#ffff18"></div>
<div class="lr" style="top:169.15px"><span class="c1">Plant 2.0</span><span class="c2">15</span><span class="c3" style="letter-spacing:0.108px">Transmission T...</span></div>
<div class="ck" style="top:168.35px"></div>
<div class="sw" style="top:168.75px;background:#4a0a0a"></div>
<div class="lr" style="top:179.56px"><span class="c1">Plant 2.0</span><span class="c2">16</span><span class="c3" style="letter-spacing:-0.067px">Wire-structure C...</span></div>
<div class="ck" style="top:178.76px"></div>
<div class="sw" style="top:179.16px;background:#ff8a0e"></div>
<div class="lr" style="top:189.97px"><span class="c1">Plant 2.0</span><span class="c2">17</span><span class="c3" style="letter-spacing:0.129px">Bridge Deck</span></div>
<div class="ck" style="top:189.17px"></div>
<div class="sw" style="top:189.57px;background:#a8060c"></div>
<div class="lr" style="top:200.38px"><span class="c1">Plant 2.0</span><span class="c2">18</span><span class="c3" style="letter-spacing:0.075px">High Noise</span></div>
<div class="ck" style="top:199.58px"></div>
<div class="sw" style="top:199.98px;background:#0a0a64"></div>
<div class="lr" style="top:210.79px"><span class="c1">Plant 2.0</span><span class="c2">19</span><span class="c3" style="letter-spacing:-0.072px">Overhead Struct...</span></div>
<div class="ck" style="top:209.99px"></div>
<div class="sw" style="top:210.39px;background:#d8086c"></div>
<div class="lr" style="top:221.20px"><span class="c1">Plant 2.0</span><span class="c2">20</span><span class="c3" style="letter-spacing:0.005px">Ignored Ground</span></div>
<div class="ck" style="top:220.40px"></div>
<div class="sw" style="top:220.80px;background:#6e4618"></div>
<div class="lr" style="top:231.61px"><span class="c1">Plant 2.0</span><span class="c2">21</span><span class="c3" style="letter-spacing:0.035px">Snow</span></div>
<div class="ck" style="top:230.81px"></div>
<div class="sw" style="top:231.21px;background:#ffffff"></div>
<div class="lr" style="top:242.02px"><span class="c1">Plant 2.0</span><span class="c2">22</span><span class="c3" style="letter-spacing:0.064px">Temporal Exclu...</span></div>
<div class="ck" style="top:241.22px"></div>
<div class="sw" style="top:241.62px;background:#c2040e"></div>
<div class="lr" style="top:252.43px"><span class="c1">Plant 2.0</span><span class="c2">23</span><span class="c3" style="letter-spacing:0.221px">Reserved</span></div>
<div class="ck" style="top:251.63px"></div>
<div class="sw" style="top:252.03px;background:#f82ae0"></div>
<div class="lr" style="top:262.84px"><span class="c1">Plant 2.0</span><span class="c2">24</span><span class="c3" style="letter-spacing:0.221px">Reserved</span></div>
<div class="ck" style="top:262.04px"></div>
<div class="sw" style="top:262.44px;background:#c40cb0"></div>
<div class="lr" style="top:273.25px"><span class="c1">Plant 2.0</span><span class="c2">25</span><span class="c3" style="letter-spacing:0.221px">Reserved</span></div>
<div class="ck" style="top:272.45px"></div>
<div class="sw" style="top:272.85px;background:#92a8f0"></div>
<div class="lr" style="top:283.66px"><span class="c1">Plant 2.0</span><span class="c2">26</span><span class="c3" style="letter-spacing:0.221px">Reserved</span></div>
<div class="ck" style="top:282.86px"></div>
<div class="sw" style="top:283.26px;background:#3a9a5c"></div>
<div class="lr" style="top:294.07px"><span class="c1">Plant 2.0</span><span class="c2">27</span><span class="c3" style="letter-spacing:0.221px">Reserved</span></div>
<div class="ck" style="top:293.27px"></div>
<div class="sw" style="top:293.67px;background:#d86284"></div>
<div class="lr" style="top:304.48px"><span class="c1">Plant 2.0</span><span class="c2">28</span><span class="c3" style="letter-spacing:0.221px">Reserved</span></div>
<div class="ck" style="top:303.68px"></div>
<div class="sw" style="top:304.08px;background:#2c9a84"></div>
<div class="lr" style="top:314.89px"><span class="c1">Plant 2.0</span><span class="c2">29</span><span class="c3" style="letter-spacing:0.221px">Reserved</span></div>
<div class="ck" style="top:314.09px"></div>
<div class="sw" style="top:314.49px;background:#4a78a0"></div>
<div class="lr" style="top:325.30px"><span class="c1">Plant 2.0</span><span class="c2">30</span><span class="c3" style="letter-spacing:0.221px">Reserved</span></div>
<div class="ck" style="top:324.50px"></div>
<div class="sw" style="top:324.90px;background:#1e4a3e"></div>
<div class="lr" style="top:335.71px"><span class="c1">Plant 2.0</span><span class="c2">31</span><span class="c3" style="letter-spacing:0.221px">Reserved</span></div>
<div class="ck" style="top:334.91px"></div>
<div class="sw" style="top:335.31px;background:#5a98fa"></div>
<div class="lr" style="top:346.12px"><span class="c1">Plant 2.0</span><span class="c2">32</span><span class="c3" style="letter-spacing:0.221px">Reserved</span></div>
<div class="ck" style="top:345.32px"></div>
<div class="sw" style="top:345.72px;background:#d8fa32"></div>
<div class="lr" style="top:356.53px"><span class="c1">Plant 2.0</span><span class="c2">33</span><span class="c3" style="letter-spacing:0.221px">Reserved</span></div>
<div class="ck" style="top:355.73px"></div>
<div class="sw" style="top:356.13px;background:#f0aa9c"></div>
<div class="lr" style="top:366.94px"><span class="c1">Plant 2.0</span><span class="c2">34</span><span class="c3" style="letter-spacing:0.221px">Reserved</span></div>
<div class="ck" style="top:366.14px"></div>
<div class="sw" style="top:366.54px;background:#c09a44"></div>
<div class="lr" style="top:377.35px"><span class="c1">Plant 2.0</span><span class="c2">35</span><span class="c3" style="letter-spacing:0.221px">Reserved</span></div>
<div class="ck" style="top:376.55px"></div>
<div class="sw" style="top:376.95px;background:#4ac4c0"></div>
<div class="lr" style="top:387.76px"><span class="c1">Plant 2.0</span><span class="c2">36</span><span class="c3" style="letter-spacing:0.221px">Reserved</span></div>
<div class="ck" style="top:386.96px"></div>
<div class="sw" style="top:387.36px;background:#aaaaaa"></div>
<div class="lr" style="top:398.17px"><span class="c1">Plant 2.0</span><span class="c2">37</span><span class="c3" style="letter-spacing:0.221px">Reserved</span></div>
<div class="ck" style="top:397.37px"></div>
<div class="sw" style="top:397.77px;background:#3cc43e"></div>
<div class="lr" style="top:408.58px"><span class="c1">Plant 2.0</span><span class="c2">38</span><span class="c3" style="letter-spacing:0.221px">Reserved</span></div>
<div class="ck" style="top:407.78px"></div>
<div class="sw" style="top:408.18px;background:#d09222"></div>
<div class="lr" style="top:418.99px"><span class="c1">Plant 2.0</span><span class="c2">39</span><span class="c3" style="letter-spacing:0.221px">Reserved</span></div>
<div class="ck" style="top:418.19px"></div>
<div class="sw" style="top:418.59px;background:#3c98cc"></div>
<div class="lr" style="top:429.40px"><span class="c1">Plant 2.0</span><span class="c2">40</span><span class="c3" style="letter-spacing:0.221px">Reserved</span></div>
<div class="ck" style="top:428.60px"></div>
<div class="sw" style="top:429.00px;background:#c8b8e8"></div>
<div class="lr" style="top:439.81px"><span class="c1">Plant 2.0</span><span class="c2">41</span><span class="c3" style="letter-spacing:0.221px">Reserved</span></div>
<div class="ck" style="top:439.01px"></div>
<div class="sw" style="top:439.41px;background:#161a50"></div>
<div class="lr" style="top:450.22px"><span class="c1">Plant 2.0</span><span class="c2">42</span><span class="c3" style="letter-spacing:0.221px">Reserved</span></div>
<div class="ck" style="top:449.42px"></div>
<div class="sw" style="top:449.82px;background:#1a6eb4"></div>
<div class="lr" style="top:460.63px"><span class="c1">Plant 2.0</span><span class="c2">43</span><span class="c3" style="letter-spacing:0.221px">Reserved</span></div>
<div class="ck" style="top:459.83px"></div>
<div class="sw" style="top:460.23px;background:#18ea4a"></div>
<div class="lr" style="top:471.04px"><span class="c1">Plant 2.0</span><span class="c2">44</span><span class="c3" style="letter-spacing:0.221px">Reserved</span></div>
<div class="ck" style="top:470.24px"></div>
<div class="sw" style="top:470.64px;background:#8a9e92"></div>
<div class="lr" style="top:481.45px"><span class="c1">Plant 2.0</span><span class="c2">45</span><span class="c3" style="letter-spacing:0.221px">Reserved</span></div>
<div class="ck" style="top:480.65px"></div>
<div class="sw" style="top:481.05px;background:#84b830"></div>
<div class="abs" style="left:348.6px;top:0;width:13px;height:494px;background:#f0f0f0"></div>
<div class="abs" style="left:352.6px;top:10.7px;width:1.9px;height:84px;background:#858585;border-radius:1px"></div>
</div>
</div>
<div id="topline" class="abs"></div>
</body>
</html>
